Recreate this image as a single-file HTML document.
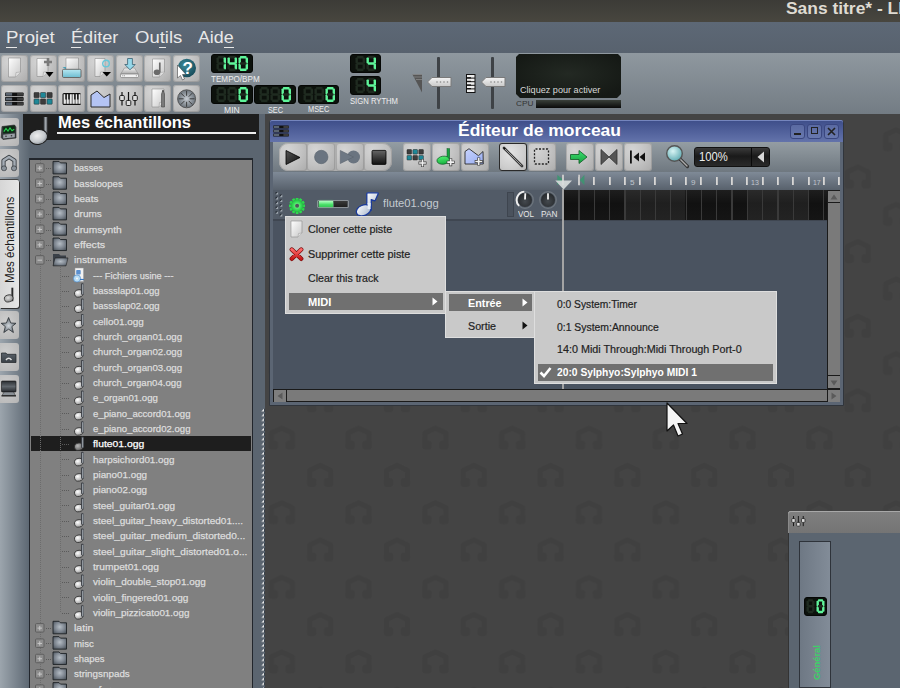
<!DOCTYPE html><html><head><meta charset="utf-8"><style>
*{margin:0;padding:0;box-sizing:border-box}
html,body{width:900px;height:688px;overflow:hidden;background:#444;font-family:"Liberation Sans", sans-serif}
.a{position:absolute}
.t{position:absolute;white-space:nowrap;line-height:1}
.tb{position:absolute;width:27px;height:27px;border-radius:3px;background:radial-gradient(ellipse at 30% 25%,#d4d4d4 0%,#c3c3c3 50%,#ababab 100%);box-shadow:inset 0 0 0 1px rgba(110,110,110,.3)}
</style></head><body><svg class="a" style="left:0px;top:114px;" width="900" height="574" viewBox="0 0 900 574"><defs><pattern id="lg" patternUnits="userSpaceOnUse" width="76.8" height="74.6" x="13.0" y="-12.0"><g transform="translate(0,0)"><path d="M-10.5,9 L-10.5,-4.5 L0,-9.5 L10.5,-4.5 L10.5,9" fill="none" stroke="#404040" stroke-width="5.2" stroke-linecap="round" stroke-linejoin="round"/><rect x="-13.2" y="3" width="9.5" height="9" rx="3" fill="#404040"/><rect x="3.7" y="3" width="9.5" height="9" rx="3" fill="#404040"/></g><g transform="translate(76.8,0)"><path d="M-10.5,9 L-10.5,-4.5 L0,-9.5 L10.5,-4.5 L10.5,9" fill="none" stroke="#404040" stroke-width="5.2" stroke-linecap="round" stroke-linejoin="round"/><rect x="-13.2" y="3" width="9.5" height="9" rx="3" fill="#404040"/><rect x="3.7" y="3" width="9.5" height="9" rx="3" fill="#404040"/></g><g transform="translate(0,74.6)"><path d="M-10.5,9 L-10.5,-4.5 L0,-9.5 L10.5,-4.5 L10.5,9" fill="none" stroke="#404040" stroke-width="5.2" stroke-linecap="round" stroke-linejoin="round"/><rect x="-13.2" y="3" width="9.5" height="9" rx="3" fill="#404040"/><rect x="3.7" y="3" width="9.5" height="9" rx="3" fill="#404040"/></g><g transform="translate(76.8,74.6)"><path d="M-10.5,9 L-10.5,-4.5 L0,-9.5 L10.5,-4.5 L10.5,9" fill="none" stroke="#404040" stroke-width="5.2" stroke-linecap="round" stroke-linejoin="round"/><rect x="-13.2" y="3" width="9.5" height="9" rx="3" fill="#404040"/><rect x="3.7" y="3" width="9.5" height="9" rx="3" fill="#404040"/></g><g transform="translate(38.4,37.3)"><path d="M-10.5,9 L-10.5,-4.5 L0,-9.5 L10.5,-4.5 L10.5,9" fill="none" stroke="#404040" stroke-width="5.2" stroke-linecap="round" stroke-linejoin="round"/><rect x="-13.2" y="3" width="9.5" height="9" rx="3" fill="#404040"/><rect x="3.7" y="3" width="9.5" height="9" rx="3" fill="#404040"/></g></pattern></defs><rect width="900" height="574" fill="#444444"/><rect width="900" height="574" fill="url(#lg)"/></svg><div class="a" style="left:0px;top:0px;width:900px;height:22px;background:linear-gradient(#3c3b37,#48463f)"></div><div class="t" style="left:785.50px;top:1.46px;font-size:16px;color:#dfdbd2;font-weight:bold;transform:scaleX(1.0880);transform-origin:0 0;">Sans titre* - LMMS</div><div class="a" style="left:0px;top:22px;width:900px;height:31px;background:linear-gradient(#5d6876,#58626e)"></div><div class="t" style="left:6.00px;top:28.91px;font-size:17px;color:#e8e8e8;transform:scaleX(1.0966);transform-origin:0 0;">Projet</div><div class="a" style="left:6px;top:46.8px;width:10.5px;height:1.3px;background:#e8e8e8"></div><div class="t" style="left:71.30px;top:28.91px;font-size:17px;color:#e8e8e8;transform:scaleX(1.0673);transform-origin:0 0;">Éditer</div><div class="a" style="left:71.3px;top:46.8px;width:9.5px;height:1.3px;background:#e8e8e8"></div><div class="t" style="left:135.00px;top:28.91px;font-size:17px;color:#e8e8e8;transform:scaleX(1.0885);transform-origin:0 0;">Outils</div><div class="a" style="left:159px;top:46.8px;width:7.2px;height:1.3px;background:#e8e8e8"></div><div class="t" style="left:197.70px;top:28.91px;font-size:17px;color:#e8e8e8;transform:scaleX(1.0462);transform-origin:0 0;">Aide</div><div class="a" style="left:224px;top:46.8px;width:10px;height:1.3px;background:#e8e8e8"></div><div class="a" style="left:0px;top:53px;width:900px;height:61px;background:linear-gradient(#8f989f,#737c84)"></div><div class="tb" style="left:1px;top:54.6px"></div><div class="tb" style="left:30px;top:54.6px"></div><div class="tb" style="left:58px;top:54.6px"></div><div class="tb" style="left:87px;top:54.6px"></div><div class="tb" style="left:116px;top:54.6px"></div><div class="tb" style="left:144px;top:54.6px"></div><div class="tb" style="left:173px;top:54.6px"></div><div class="tb" style="left:1px;top:84.8px"></div><div class="tb" style="left:30px;top:84.8px"></div><div class="tb" style="left:58px;top:84.8px"></div><div class="tb" style="left:87px;top:84.8px"></div><div class="tb" style="left:116px;top:84.8px"></div><div class="tb" style="left:144px;top:84.8px"></div><div class="tb" style="left:173px;top:84.8px"></div><svg class="a" style="left:1px;top:55px;" width="27" height="27" viewBox="0 0 27 27"><defs><linearGradient id="pg1" x1="0" y1="0" x2="1" y2="1"><stop offset="0" stop-color="#ffffff"/><stop offset="1" stop-color="#c8c8c8"/></linearGradient></defs><path d="M7.5,3 H19.5 V17 L14.5,22 H7.5 Z" fill="url(#pg1)" stroke="#8a8a8a" stroke-width="0.6"/><path d="M14.5,22 L15.0,17.5 L19.5,17" fill="#e0e0e0" stroke="#9a9a9a" stroke-width="0.5"/></svg><svg class="a" style="left:30px;top:55px;" width="27" height="27" viewBox="0 0 27 27"><defs><linearGradient id="pg2" x1="0" y1="0" x2="1" y2="1"><stop offset="0" stop-color="#ffffff"/><stop offset="1" stop-color="#c8c8c8"/></linearGradient></defs><path d="M7,3.5 H18 V16.5 L13,21.5 H7 Z" fill="url(#pg2)" stroke="#8a8a8a" stroke-width="0.6"/><path d="M13,21.5 L13.5,17.0 L18,16.5" fill="#e0e0e0" stroke="#9a9a9a" stroke-width="0.5"/><path d="M18,3 V11 M14,7 H22" stroke="#7a7a7a" stroke-width="2.6"/><path d="M15.5,17 H23.5 L19.5,22 Z" fill="#000"/></svg><svg class="a" style="left:58px;top:55px;" width="27" height="27" viewBox="0 0 27 27"><defs><linearGradient id="pg3" x1="0" y1="0" x2="1" y2="1"><stop offset="0" stop-color="#ffffff"/><stop offset="1" stop-color="#c8c8c8"/></linearGradient></defs><path d="M8,3 H20.5 V15 L20.5,15 H8 Z" fill="url(#pg3)" stroke="#8a8a8a" stroke-width="0.6"/><path d="M20.5,15 L21.0,15.5 L20.5,15" fill="#e0e0e0" stroke="#9a9a9a" stroke-width="0.5"/><defs><linearGradient id="tray" x1="0" y1="0" x2="0" y2="1"><stop offset="0" stop-color="#b8e8f2"/><stop offset="1" stop-color="#6cbcd0"/></linearGradient></defs><path d="M4.5,12 H8 V14.5 Z" fill="#4aa0b8"/><rect x="4.5" y="14.3" width="18.5" height="8.2" rx="1.2" fill="url(#tray)" stroke="#5a5450" stroke-width="0.8"/></svg><svg class="a" style="left:87px;top:55px;" width="27" height="27" viewBox="0 0 27 27"><defs><linearGradient id="pg4" x1="0" y1="0" x2="1" y2="1"><stop offset="0" stop-color="#ffffff"/><stop offset="1" stop-color="#c8c8c8"/></linearGradient></defs><path d="M8,3.5 H18 V16.5 L13,21.5 H8 Z" fill="url(#pg4)" stroke="#8a8a8a" stroke-width="0.6"/><path d="M13,21.5 L13.5,17.0 L18,16.5" fill="#e0e0e0" stroke="#9a9a9a" stroke-width="0.5"/><circle cx="19" cy="8.5" r="3.3" fill="none" stroke="#66c6d8" stroke-width="1.4"/><path d="M15.5,17 H24 L19.7,21.5 Z" fill="#000"/></svg><svg class="a" style="left:116px;top:55px;" width="27" height="27" viewBox="0 0 27 27"><defs><linearGradient id="sv" x1="0" y1="0" x2="0" y2="1"><stop offset="0" stop-color="#f0f0f0"/><stop offset="1" stop-color="#a8a8a8"/></linearGradient></defs><path d="M8.5,13 H18.5 L22.5,19.2 H4.5 Z" fill="url(#sv)" stroke="#8a8a8a" stroke-width="0.6"/><rect x="4.5" y="19" width="18" height="3.6" rx="1.2" fill="#f2f2f2" stroke="#7a7a7a" stroke-width="0.7"/><circle cx="6.8" cy="20.8" r="0.5" fill="#777"/><circle cx="8.4" cy="20.8" r="0.5" fill="#777"/><circle cx="20.3" cy="20.8" r="0.5" fill="#777"/><path d="M11.6,3.5 H16.4 V9.5 H19.2 L14,14.8 L8.8,9.5 H11.6 Z" fill="#96d8ea" stroke="#3a6070" stroke-width="0.8"/></svg><svg class="a" style="left:144px;top:55px;" width="27" height="27" viewBox="0 0 27 27"><defs><linearGradient id="pg6" x1="0" y1="0" x2="1" y2="1"><stop offset="0" stop-color="#ffffff"/><stop offset="1" stop-color="#c8c8c8"/></linearGradient></defs><path d="M8.5,4 H20.5 V17 L15.5,22 H8.5 Z" fill="url(#pg6)" stroke="#8a8a8a" stroke-width="0.6"/><path d="M15.5,22 L16.0,17.5 L20.5,17" fill="#e0e0e0" stroke="#9a9a9a" stroke-width="0.5"/><ellipse cx="13" cy="17.2" rx="3.3" ry="2.8" fill="#6a6a6a"/><path d="M15.8,17 V7.5" stroke="#6a6a6a" stroke-width="1.7"/></svg><svg class="a" style="left:173px;top:55px;" width="27" height="27" viewBox="0 0 27 27"><defs><radialGradient id="wt" cx="0.4" cy="0.35" r="0.7"><stop offset="0" stop-color="#3a8898"/><stop offset="1" stop-color="#174a58"/></radialGradient></defs><circle cx="13.8" cy="13" r="9.2" fill="url(#wt)"/><text x="14.8" y="19.3" font-family="Liberation Sans" font-weight="bold" font-size="17" fill="#fff" text-anchor="middle">?</text><path d="M4.5,10 V23 L7.5,20.5 L9.5,25 L11.5,24 L9.5,19.5 L13,19.5 Z" fill="#fff" stroke="#444" stroke-width="0.6"/></svg><svg class="a" style="left:1px;top:85px;" width="27" height="27" viewBox="0 0 27 27"><rect x="4" y="7.40" width="18.6" height="3.87" rx="0.8" fill="#111"/><rect x="4.6" y="8.00" width="6.51" height="2.67" fill="#5a6470"/><rect x="16.09" y="8.00" width="6.14" height="2.67" fill="#3c3c3c"/><rect x="4" y="12.07" width="18.6" height="3.87" rx="0.8" fill="#111"/><rect x="4.6" y="12.67" width="6.51" height="2.67" fill="#5a6470"/><rect x="16.09" y="12.67" width="6.14" height="2.67" fill="#3c3c3c"/><rect x="4" y="16.73" width="18.6" height="3.87" rx="0.8" fill="#111"/><rect x="4.6" y="17.33" width="6.51" height="2.67" fill="#5a6470"/><rect x="16.09" y="17.33" width="6.14" height="2.67" fill="#3c3c3c"/></svg><svg class="a" style="left:30px;top:85px;" width="27" height="27" viewBox="0 0 27 27"><rect x="4.00" y="7.50" width="5.2" height="5.2" rx="0.6" fill="#3c3c3c" stroke="#222" stroke-width="0.5"/><rect x="10.50" y="7.50" width="5.2" height="5.2" rx="0.6" fill="#1f8898" stroke="#222" stroke-width="0.5"/><rect x="17.00" y="7.50" width="5.2" height="5.2" rx="0.6" fill="#3c3c3c" stroke="#222" stroke-width="0.5"/><rect x="4.00" y="14.00" width="5.2" height="5.2" rx="0.6" fill="#1f8898" stroke="#222" stroke-width="0.5"/><rect x="10.50" y="14.00" width="5.2" height="5.2" rx="0.6" fill="#3c3c3c" stroke="#222" stroke-width="0.5"/><rect x="17.00" y="14.00" width="5.2" height="5.2" rx="0.6" fill="#1f8898" stroke="#222" stroke-width="0.5"/></svg><svg class="a" style="left:58px;top:85px;" width="27" height="27" viewBox="0 0 27 27"><rect x="4.5" y="8" width="18.5" height="12" rx="1.5" fill="#111"/><rect x="5.60" y="9.2" width="2.3" height="9.6" fill="#e8e8e8"/><rect x="8.55" y="9.2" width="2.3" height="9.6" fill="#e8e8e8"/><rect x="11.50" y="9.2" width="2.3" height="9.6" fill="#e8e8e8"/><rect x="14.45" y="9.2" width="2.3" height="9.6" fill="#e8e8e8"/><rect x="17.40" y="9.2" width="2.3" height="9.6" fill="#e8e8e8"/><rect x="20.35" y="9.2" width="2.3" height="9.6" fill="#e8e8e8"/><rect x="7.30" y="9" width="1.4" height="5.5" fill="#111"/><rect x="10.25" y="9" width="1.4" height="5.5" fill="#111"/><rect x="16.15" y="9" width="1.4" height="5.5" fill="#111"/><rect x="19.10" y="9" width="1.4" height="5.5" fill="#111"/></svg><svg class="a" style="left:87px;top:85px;" width="27" height="27" viewBox="0 0 27 27"><path d="M4,10 L10,6 L17,12.5 L23,9 V22 H4 Z" fill="#b4c4f4" stroke="#2a2a2a" stroke-width="1"/></svg><svg class="a" style="left:116px;top:85px;" width="27" height="27" viewBox="0 0 27 27"><path d="M6.0,7 V20.5" stroke="#111" stroke-width="1.2"/><rect x="3.7" y="10.5" width="4.6" height="5.0" rx="1.0" fill="#ddd" stroke="#111" stroke-width="0.9"/><path d="M12.5,7 V20.5" stroke="#111" stroke-width="1.2"/><rect x="10.2" y="15.5" width="4.6" height="5.0" rx="1.0" fill="#ddd" stroke="#111" stroke-width="0.9"/><path d="M19.0,7 V20.5" stroke="#111" stroke-width="1.2"/><rect x="16.7" y="10.5" width="4.6" height="5.0" rx="1.0" fill="#ddd" stroke="#111" stroke-width="0.9"/></svg><svg class="a" style="left:144px;top:85px;" width="27" height="27" viewBox="0 0 27 27"><defs><linearGradient id="pg7" x1="0" y1="0" x2="1" y2="1"><stop offset="0" stop-color="#ffffff"/><stop offset="1" stop-color="#c8c8c8"/></linearGradient></defs><path d="M8,4 H20 V17 L15,22 H8 Z" fill="url(#pg7)" stroke="#8a8a8a" stroke-width="0.6"/><path d="M15,22 L15.5,17.5 L20,17" fill="#e0e0e0" stroke="#9a9a9a" stroke-width="0.5"/><path d="M17.5,9 L19,5 L20.5,9 V22 H17.5 Z" fill="#7a7a7a" stroke="#444" stroke-width="0.6"/><path d="M18.4,6.5 L19,5 L19.6,6.5 Z" fill="#111"/></svg><svg class="a" style="left:173px;top:85px;" width="27" height="27" viewBox="0 0 27 27"><defs><radialGradient id="ctl" cx="0.5" cy="0.5" r="0.6"><stop offset="0" stop-color="#c6ccd2"/><stop offset="1" stop-color="#5a626a"/></radialGradient></defs><circle cx="13.6" cy="13.8" r="9" fill="url(#ctl)" stroke="#444" stroke-width="0.8"/><path d="M16.60,13.80 L21.60,13.80" stroke="#333" stroke-width="0.9"/><path d="M15.72,15.92 L19.26,19.46" stroke="#333" stroke-width="0.9"/><path d="M13.60,16.80 L13.60,21.80" stroke="#333" stroke-width="0.9"/><path d="M11.48,15.92 L7.94,19.46" stroke="#333" stroke-width="0.9"/><path d="M10.60,13.80 L5.60,13.80" stroke="#333" stroke-width="0.9"/><path d="M11.48,11.68 L7.94,8.14" stroke="#333" stroke-width="0.9"/><path d="M13.60,10.80 L13.60,5.80" stroke="#333" stroke-width="0.9"/><path d="M15.72,11.68 L19.26,8.14" stroke="#333" stroke-width="0.9"/></svg><svg class="a" style="left:211px;top:54px;" width="42" height="19" viewBox="0 0 42 19"><rect x="0.5" y="0.5" width="41" height="18" rx="2.5" fill="#0c110c" stroke="#050705"/><rect x="6.94" y="2.00" width="6.62" height="2.40" rx="0.8" fill="#1f2b20"/><rect x="12.60" y="3.44" width="2.40" height="6.06" rx="0.8" fill="#5ff59a"/><rect x="12.60" y="9.50" width="2.40" height="6.06" rx="0.8" fill="#5ff59a"/><rect x="6.94" y="14.60" width="6.62" height="2.40" rx="0.8" fill="#1f2b20"/><rect x="5.50" y="9.50" width="2.40" height="6.06" rx="0.8" fill="#1f2b20"/><rect x="5.50" y="3.44" width="2.40" height="6.06" rx="0.8" fill="#1f2b20"/><rect x="6.94" y="8.30" width="6.62" height="2.40" rx="0.8" fill="#1f2b20"/><rect x="17.94" y="2.00" width="6.62" height="2.40" rx="0.8" fill="#1f2b20"/><rect x="23.60" y="3.44" width="2.40" height="6.06" rx="0.8" fill="#5ff59a"/><rect x="23.60" y="9.50" width="2.40" height="6.06" rx="0.8" fill="#5ff59a"/><rect x="17.94" y="14.60" width="6.62" height="2.40" rx="0.8" fill="#1f2b20"/><rect x="16.50" y="9.50" width="2.40" height="6.06" rx="0.8" fill="#1f2b20"/><rect x="16.50" y="3.44" width="2.40" height="6.06" rx="0.8" fill="#5ff59a"/><rect x="17.94" y="8.30" width="6.62" height="2.40" rx="0.8" fill="#5ff59a"/><rect x="28.94" y="2.00" width="6.62" height="2.40" rx="0.8" fill="#5ff59a"/><rect x="34.60" y="3.44" width="2.40" height="6.06" rx="0.8" fill="#5ff59a"/><rect x="34.60" y="9.50" width="2.40" height="6.06" rx="0.8" fill="#5ff59a"/><rect x="28.94" y="14.60" width="6.62" height="2.40" rx="0.8" fill="#5ff59a"/><rect x="27.50" y="9.50" width="2.40" height="6.06" rx="0.8" fill="#5ff59a"/><rect x="27.50" y="3.44" width="2.40" height="6.06" rx="0.8" fill="#5ff59a"/><rect x="28.94" y="8.30" width="6.62" height="2.40" rx="0.8" fill="#1f2b20"/></svg><svg class="a" style="left:211px;top:85px;" width="42" height="19" viewBox="0 0 42 19"><rect x="0.5" y="0.5" width="41" height="18" rx="2.5" fill="#0c110c" stroke="#050705"/><rect x="6.94" y="2.00" width="6.62" height="2.40" rx="0.8" fill="#1f2b20"/><rect x="12.60" y="3.44" width="2.40" height="6.06" rx="0.8" fill="#1f2b20"/><rect x="12.60" y="9.50" width="2.40" height="6.06" rx="0.8" fill="#1f2b20"/><rect x="6.94" y="14.60" width="6.62" height="2.40" rx="0.8" fill="#1f2b20"/><rect x="5.50" y="9.50" width="2.40" height="6.06" rx="0.8" fill="#1f2b20"/><rect x="5.50" y="3.44" width="2.40" height="6.06" rx="0.8" fill="#1f2b20"/><rect x="6.94" y="8.30" width="6.62" height="2.40" rx="0.8" fill="#1f2b20"/><rect x="17.94" y="2.00" width="6.62" height="2.40" rx="0.8" fill="#1f2b20"/><rect x="23.60" y="3.44" width="2.40" height="6.06" rx="0.8" fill="#1f2b20"/><rect x="23.60" y="9.50" width="2.40" height="6.06" rx="0.8" fill="#1f2b20"/><rect x="17.94" y="14.60" width="6.62" height="2.40" rx="0.8" fill="#1f2b20"/><rect x="16.50" y="9.50" width="2.40" height="6.06" rx="0.8" fill="#1f2b20"/><rect x="16.50" y="3.44" width="2.40" height="6.06" rx="0.8" fill="#1f2b20"/><rect x="17.94" y="8.30" width="6.62" height="2.40" rx="0.8" fill="#1f2b20"/><rect x="28.94" y="2.00" width="6.62" height="2.40" rx="0.8" fill="#5ff59a"/><rect x="34.60" y="3.44" width="2.40" height="6.06" rx="0.8" fill="#5ff59a"/><rect x="34.60" y="9.50" width="2.40" height="6.06" rx="0.8" fill="#5ff59a"/><rect x="28.94" y="14.60" width="6.62" height="2.40" rx="0.8" fill="#5ff59a"/><rect x="27.50" y="9.50" width="2.40" height="6.06" rx="0.8" fill="#5ff59a"/><rect x="27.50" y="3.44" width="2.40" height="6.06" rx="0.8" fill="#5ff59a"/><rect x="28.94" y="8.30" width="6.62" height="2.40" rx="0.8" fill="#1f2b20"/></svg><svg class="a" style="left:254px;top:85px;" width="42" height="19" viewBox="0 0 42 19"><rect x="0.5" y="0.5" width="41" height="18" rx="2.5" fill="#0c110c" stroke="#050705"/><rect x="6.94" y="2.00" width="6.62" height="2.40" rx="0.8" fill="#1f2b20"/><rect x="12.60" y="3.44" width="2.40" height="6.06" rx="0.8" fill="#1f2b20"/><rect x="12.60" y="9.50" width="2.40" height="6.06" rx="0.8" fill="#1f2b20"/><rect x="6.94" y="14.60" width="6.62" height="2.40" rx="0.8" fill="#1f2b20"/><rect x="5.50" y="9.50" width="2.40" height="6.06" rx="0.8" fill="#1f2b20"/><rect x="5.50" y="3.44" width="2.40" height="6.06" rx="0.8" fill="#1f2b20"/><rect x="6.94" y="8.30" width="6.62" height="2.40" rx="0.8" fill="#1f2b20"/><rect x="17.94" y="2.00" width="6.62" height="2.40" rx="0.8" fill="#1f2b20"/><rect x="23.60" y="3.44" width="2.40" height="6.06" rx="0.8" fill="#1f2b20"/><rect x="23.60" y="9.50" width="2.40" height="6.06" rx="0.8" fill="#1f2b20"/><rect x="17.94" y="14.60" width="6.62" height="2.40" rx="0.8" fill="#1f2b20"/><rect x="16.50" y="9.50" width="2.40" height="6.06" rx="0.8" fill="#1f2b20"/><rect x="16.50" y="3.44" width="2.40" height="6.06" rx="0.8" fill="#1f2b20"/><rect x="17.94" y="8.30" width="6.62" height="2.40" rx="0.8" fill="#1f2b20"/><rect x="28.94" y="2.00" width="6.62" height="2.40" rx="0.8" fill="#5ff59a"/><rect x="34.60" y="3.44" width="2.40" height="6.06" rx="0.8" fill="#5ff59a"/><rect x="34.60" y="9.50" width="2.40" height="6.06" rx="0.8" fill="#5ff59a"/><rect x="28.94" y="14.60" width="6.62" height="2.40" rx="0.8" fill="#5ff59a"/><rect x="27.50" y="9.50" width="2.40" height="6.06" rx="0.8" fill="#5ff59a"/><rect x="27.50" y="3.44" width="2.40" height="6.06" rx="0.8" fill="#5ff59a"/><rect x="28.94" y="8.30" width="6.62" height="2.40" rx="0.8" fill="#1f2b20"/></svg><svg class="a" style="left:298px;top:85px;" width="41" height="19" viewBox="0 0 41 19"><rect x="0.5" y="0.5" width="40" height="18" rx="2.5" fill="#0c110c" stroke="#050705"/><rect x="6.94" y="2.00" width="6.62" height="2.40" rx="0.8" fill="#1f2b20"/><rect x="12.60" y="3.44" width="2.40" height="6.06" rx="0.8" fill="#1f2b20"/><rect x="12.60" y="9.50" width="2.40" height="6.06" rx="0.8" fill="#1f2b20"/><rect x="6.94" y="14.60" width="6.62" height="2.40" rx="0.8" fill="#1f2b20"/><rect x="5.50" y="9.50" width="2.40" height="6.06" rx="0.8" fill="#1f2b20"/><rect x="5.50" y="3.44" width="2.40" height="6.06" rx="0.8" fill="#1f2b20"/><rect x="6.94" y="8.30" width="6.62" height="2.40" rx="0.8" fill="#1f2b20"/><rect x="17.94" y="2.00" width="6.62" height="2.40" rx="0.8" fill="#1f2b20"/><rect x="23.60" y="3.44" width="2.40" height="6.06" rx="0.8" fill="#1f2b20"/><rect x="23.60" y="9.50" width="2.40" height="6.06" rx="0.8" fill="#1f2b20"/><rect x="17.94" y="14.60" width="6.62" height="2.40" rx="0.8" fill="#1f2b20"/><rect x="16.50" y="9.50" width="2.40" height="6.06" rx="0.8" fill="#1f2b20"/><rect x="16.50" y="3.44" width="2.40" height="6.06" rx="0.8" fill="#1f2b20"/><rect x="17.94" y="8.30" width="6.62" height="2.40" rx="0.8" fill="#1f2b20"/><rect x="28.94" y="2.00" width="6.62" height="2.40" rx="0.8" fill="#5ff59a"/><rect x="34.60" y="3.44" width="2.40" height="6.06" rx="0.8" fill="#5ff59a"/><rect x="34.60" y="9.50" width="2.40" height="6.06" rx="0.8" fill="#5ff59a"/><rect x="28.94" y="14.60" width="6.62" height="2.40" rx="0.8" fill="#5ff59a"/><rect x="27.50" y="9.50" width="2.40" height="6.06" rx="0.8" fill="#5ff59a"/><rect x="27.50" y="3.44" width="2.40" height="6.06" rx="0.8" fill="#5ff59a"/><rect x="28.94" y="8.30" width="6.62" height="2.40" rx="0.8" fill="#1f2b20"/></svg><svg class="a" style="left:350px;top:54px;" width="31" height="19" viewBox="0 0 31 19"><rect x="0.5" y="0.5" width="30" height="18" rx="2.5" fill="#0c110c" stroke="#050705"/><rect x="6.94" y="2.00" width="6.62" height="2.40" rx="0.8" fill="#1f2b20"/><rect x="12.60" y="3.44" width="2.40" height="6.06" rx="0.8" fill="#1f2b20"/><rect x="12.60" y="9.50" width="2.40" height="6.06" rx="0.8" fill="#1f2b20"/><rect x="6.94" y="14.60" width="6.62" height="2.40" rx="0.8" fill="#1f2b20"/><rect x="5.50" y="9.50" width="2.40" height="6.06" rx="0.8" fill="#1f2b20"/><rect x="5.50" y="3.44" width="2.40" height="6.06" rx="0.8" fill="#1f2b20"/><rect x="6.94" y="8.30" width="6.62" height="2.40" rx="0.8" fill="#1f2b20"/><rect x="17.94" y="2.00" width="6.62" height="2.40" rx="0.8" fill="#1f2b20"/><rect x="23.60" y="3.44" width="2.40" height="6.06" rx="0.8" fill="#5ff59a"/><rect x="23.60" y="9.50" width="2.40" height="6.06" rx="0.8" fill="#5ff59a"/><rect x="17.94" y="14.60" width="6.62" height="2.40" rx="0.8" fill="#1f2b20"/><rect x="16.50" y="9.50" width="2.40" height="6.06" rx="0.8" fill="#1f2b20"/><rect x="16.50" y="3.44" width="2.40" height="6.06" rx="0.8" fill="#5ff59a"/><rect x="17.94" y="8.30" width="6.62" height="2.40" rx="0.8" fill="#5ff59a"/></svg><svg class="a" style="left:350px;top:76px;" width="31" height="19" viewBox="0 0 31 19"><rect x="0.5" y="0.5" width="30" height="18" rx="2.5" fill="#0c110c" stroke="#050705"/><rect x="6.94" y="2.00" width="6.62" height="2.40" rx="0.8" fill="#1f2b20"/><rect x="12.60" y="3.44" width="2.40" height="6.06" rx="0.8" fill="#1f2b20"/><rect x="12.60" y="9.50" width="2.40" height="6.06" rx="0.8" fill="#1f2b20"/><rect x="6.94" y="14.60" width="6.62" height="2.40" rx="0.8" fill="#1f2b20"/><rect x="5.50" y="9.50" width="2.40" height="6.06" rx="0.8" fill="#1f2b20"/><rect x="5.50" y="3.44" width="2.40" height="6.06" rx="0.8" fill="#1f2b20"/><rect x="6.94" y="8.30" width="6.62" height="2.40" rx="0.8" fill="#1f2b20"/><rect x="17.94" y="2.00" width="6.62" height="2.40" rx="0.8" fill="#1f2b20"/><rect x="23.60" y="3.44" width="2.40" height="6.06" rx="0.8" fill="#5ff59a"/><rect x="23.60" y="9.50" width="2.40" height="6.06" rx="0.8" fill="#5ff59a"/><rect x="17.94" y="14.60" width="6.62" height="2.40" rx="0.8" fill="#1f2b20"/><rect x="16.50" y="9.50" width="2.40" height="6.06" rx="0.8" fill="#1f2b20"/><rect x="16.50" y="3.44" width="2.40" height="6.06" rx="0.8" fill="#5ff59a"/><rect x="17.94" y="8.30" width="6.62" height="2.40" rx="0.8" fill="#5ff59a"/></svg><div class="t" style="left:211.30px;top:75.00px;font-size:8.5px;color:#eeeeee;transform:scaleX(0.9548);transform-origin:0 0;">TEMPO/BPM</div><div class="t" style="left:224.30px;top:105.60px;font-size:8.5px;color:#eeeeee;transform:scaleX(1.0076);transform-origin:0 0;">MIN</div><div class="t" style="left:268.00px;top:105.60px;font-size:8.5px;color:#eeeeee;transform:scaleX(0.8582);transform-origin:0 0;">SEC</div><div class="t" style="left:308.00px;top:105.40px;font-size:8.5px;color:#eeeeee;transform:scaleX(0.8673);transform-origin:0 0;">MSEC</div><div class="t" style="left:350.00px;top:97.40px;font-size:8.5px;color:#eeeeee;transform:scaleX(0.9021);transform-origin:0 0;">SIGN RYTHM</div><svg class="a" style="left:412px;top:74px;" width="11" height="19" viewBox="0 0 11 19"><path d="M0.5,0.5 H10 L10,18.5 Z" fill="#555"/><path d="M0.5,0.5 H10 M2,3 H10 M4,5.5 H10" stroke="#888" stroke-width="0.8"/></svg><svg class="a" style="left:466px;top:74px;" width="10" height="19" viewBox="0 0 10 19"><rect x="0" y="0" width="9.5" height="19" fill="#111"/><rect x="1" y="1.0" width="7.5" height="2.6" fill="#eee"/><rect x="1" y="4.6" width="7.5" height="2.6" fill="#eee"/><rect x="1" y="8.2" width="7.5" height="2.6" fill="#eee"/><rect x="1" y="11.8" width="7.5" height="2.6" fill="#eee"/><rect x="1" y="15.4" width="7.5" height="2.6" fill="#eee"/><rect x="0" y="3.2" width="5" height="1.2" fill="#111"/><rect x="0" y="6.8" width="5" height="1.2" fill="#111"/><rect x="0" y="10.4" width="5" height="1.2" fill="#111"/><rect x="0" y="14.0" width="5" height="1.2" fill="#111"/></svg><div class="a" style="left:437.2px;top:57px;width:3px;height:52px;background:#3e4246;border-radius:1px"></div><svg class="a" style="left:426.7px;top:77px;" width="25" height="10" viewBox="0 0 25 10"><defs><linearGradient id="hd" x1="0" y1="0" x2="0" y2="1"><stop offset="0" stop-color="#f4f4f4"/><stop offset="1" stop-color="#c8c8c8"/></linearGradient></defs><path d="M0.5,5 L5,0.5 L24,0.5 L24,9.5 L5,9.5 Z" fill="url(#hd)" stroke="#7a7a7a"/><circle cx="10.0" cy="5" r="0.8" fill="#888"/><circle cx="13.5" cy="5" r="0.8" fill="#888"/><circle cx="17.0" cy="5" r="0.8" fill="#888"/><circle cx="20.5" cy="5" r="0.8" fill="#888"/></svg><div class="a" style="left:491px;top:57px;width:3px;height:52px;background:#3e4246;border-radius:1px"></div><svg class="a" style="left:480.5px;top:77px;" width="25" height="10" viewBox="0 0 25 10"><defs><linearGradient id="hd" x1="0" y1="0" x2="0" y2="1"><stop offset="0" stop-color="#f4f4f4"/><stop offset="1" stop-color="#c8c8c8"/></linearGradient></defs><path d="M0.5,5 L5,0.5 L24,0.5 L24,9.5 L5,9.5 Z" fill="url(#hd)" stroke="#7a7a7a"/><circle cx="10.0" cy="5" r="0.8" fill="#888"/><circle cx="13.5" cy="5" r="0.8" fill="#888"/><circle cx="17.0" cy="5" r="0.8" fill="#888"/><circle cx="20.5" cy="5" r="0.8" fill="#888"/></svg><svg class="a" style="left:516px;top:54px;" width="105" height="44" viewBox="0 0 105 44"><defs><radialGradient id="cpu" cx="0.5" cy="0.45" r="0.6"><stop offset="0" stop-color="#232923"/><stop offset="1" stop-color="#151915"/></radialGradient></defs><path d="M3,0 L102,0 L105,3 L105,40 L101,44 L4,44 L0,40 L0,3 Z" fill="url(#cpu)"/></svg><div class="t" style="left:520.30px;top:86.08px;font-size:9px;color:#d8d8d8;transform:scaleX(1.0108);transform-origin:0 0;">Cliquez pour activer</div><div class="t" style="left:516.30px;top:99.63px;font-size:8px;color:#333333;transform:scaleX(1.0301);transform-origin:0 0;">CPU</div><div class="a" style="left:536px;top:100px;width:85px;height:7.5px;background:linear-gradient(#3a403a,#0a0a0a)"></div><div class="a" style="left:0px;top:114px;width:265px;height:574px;background:#5b6570"></div><div class="a" style="left:0px;top:114px;width:30px;height:574px;background:linear-gradient(90deg,#9ca5ad,#5b6671)"></div><div class="a" style="left:0px;top:118px;width:19px;height:28px;background:radial-gradient(ellipse at 30% 40%,#cfcfcf,#b4b4b4);border-radius:0 3px 3px 0"></div><div class="a" style="left:0px;top:149px;width:19px;height:28px;background:radial-gradient(ellipse at 30% 40%,#cfcfcf,#b4b4b4);border-radius:0 3px 3px 0"></div><div class="a" style="left:0px;top:311px;width:19px;height:28px;background:radial-gradient(ellipse at 30% 40%,#cfcfcf,#b4b4b4);border-radius:0 3px 3px 0"></div><div class="a" style="left:0px;top:343px;width:19px;height:28px;background:radial-gradient(ellipse at 30% 40%,#cfcfcf,#b4b4b4);border-radius:0 3px 3px 0"></div><div class="a" style="left:0px;top:375px;width:19px;height:28px;background:radial-gradient(ellipse at 30% 40%,#cfcfcf,#b4b4b4);border-radius:0 3px 3px 0"></div><div class="a" style="left:0px;top:180px;width:19.3px;height:127.5px;background:linear-gradient(90deg,#d6d6d6,#e6e6e6);border-radius:0 2px 3px 0;box-shadow:1px 1px 0 #333, 0 -1px 0 #444"></div><div class="t" style="left:4.3px;top:283.3px;font-size:12px;color:#1a1a1a;transform:rotate(-90deg) scaleX(0.965);transform-origin:0 0">Mes échantillons</div><svg class="a" style="left:0px;top:123px;" width="18" height="18" viewBox="0 0 18 18"><path d="M2,3.5 L14.5,2 L16,4 V15 L3,16.5 L1.2,14.5 Z" fill="#3a3e42" stroke="#222" stroke-width="0.6"/><path d="M3.2,3.8 L14.8,2.6 V9.4 L3.2,10.6 Z" fill="#0e2a14"/><path d="M3.8,8.6 L6,5.4 L8,8 L10,5 L12,7.8 L14.2,6.2" stroke="#2ad050" fill="none" stroke-width="1.1"/><path d="M3.2,11.8 L14.8,10.6 V14.2 L3.2,15.4 Z" fill="#9aa0a6"/><circle cx="6" cy="13.3" r="0.8" fill="#333"/><circle cx="11.5" cy="12.7" r="0.8" fill="#333"/></svg><svg class="a" style="left:0px;top:154px;" width="18" height="19" viewBox="0 0 18 19"><path d="M3.5,14.5 L3.5,6.5 L9,3 L14.5,6.5 L14.5,14.5" fill="none" stroke="#3a3f44" stroke-width="4.2" stroke-linejoin="round"/><path d="M3.5,14.5 L3.5,6.5 L9,3 L14.5,6.5 L14.5,14.5" fill="none" stroke="#a4acb4" stroke-width="2.4" stroke-linejoin="round"/><rect x="1.5" y="12" width="5" height="4.6" rx="2" fill="#8a929a" stroke="#3a3f44" stroke-width="0.8"/><rect x="11.5" y="12" width="5" height="4.6" rx="2" fill="#8a929a" stroke="#3a3f44" stroke-width="0.8"/></svg><svg class="a" style="left:0px;top:285px;" width="18" height="20" viewBox="0 0 18 20"><defs><radialGradient id="tn" cx="0.45" cy="0.4" r="0.6"><stop offset="0" stop-color="#e0e0e0"/><stop offset="1" stop-color="#8a8a8a"/></radialGradient></defs><rect x="11.4" y="2.7" width="1.9" height="13.5" fill="#2a2a2a"/><ellipse cx="8.7" cy="13.4" rx="4.4" ry="3.5" fill="url(#tn)" stroke="#333" stroke-width="0.8" transform="rotate(-15 8.7 13.4)"/></svg><svg class="a" style="left:0px;top:315px;" width="18" height="20" viewBox="0 0 18 20"><defs><radialGradient id="st" cx="0.5" cy="0.55" r="0.55"><stop offset="0" stop-color="#d0d6dc"/><stop offset="1" stop-color="#5a626a"/></radialGradient></defs><path d="M8.6,2.5 L10.8,8 L16,8.3 L11.9,11.6 L13.4,17.5 L8.6,14.2 L3.8,17.5 L5.3,11.6 L1.2,8.3 L6.4,8 Z" fill="url(#st)" stroke="#2a2f34" stroke-width="0.8" stroke-linejoin="round"/></svg><svg class="a" style="left:0px;top:350px;" width="18" height="16" viewBox="0 0 18 16"><defs><linearGradient id="hf" x1="0" y1="0" x2="0" y2="1"><stop offset="0" stop-color="#5a626a"/><stop offset="1" stop-color="#3a4046"/></linearGradient></defs><path d="M1.5,3 H6 L7,4.3 H16 V12.5 H1.5 Z" fill="url(#hf)" stroke="#1e2226" stroke-width="0.7"/><path d="M6,10 Q8.7,6.5 11.5,10" fill="none" stroke="#e0e0e0" stroke-width="1.5"/></svg><svg class="a" style="left:0px;top:379px;" width="18" height="20" viewBox="0 0 18 20"><defs><linearGradient id="cm" x1="0" y1="0" x2="0" y2="1"><stop offset="0" stop-color="#2a2e32"/><stop offset="0.5" stop-color="#60666c"/><stop offset="1" stop-color="#25282c"/></linearGradient></defs><rect x="1.5" y="2" width="14.5" height="11" rx="0.8" fill="url(#cm)" stroke="#111" stroke-width="0.6"/><path d="M4,13 L2,16.5 H15.5 L13.5,13 Z" fill="#8a9096" stroke="#222" stroke-width="0.5"/><rect x="1.5" y="16.2" width="14.5" height="1.3" fill="#222"/></svg><div class="a" style="left:23px;top:114px;width:236px;height:26px;background:#1e1e1e"></div><div class="t" style="left:58.00px;top:113.61px;font-size:17px;color:#ffffff;font-weight:bold;transform:scaleX(0.9709);transform-origin:0 0;">Mes échantillons</div><div class="a" style="left:57px;top:132.3px;width:199px;height:1.6px;background:#eeeeee"></div><svg class="a" style="left:25px;top:114px;" width="28" height="34" viewBox="0 0 28 34"><defs><radialGradient id="nt" cx="0.45" cy="0.4" r="0.6"><stop offset="0" stop-color="#eeeeee"/><stop offset="0.7" stop-color="#c4c8cc"/><stop offset="1" stop-color="#8a9096"/></radialGradient><linearGradient id="nst" gradientUnits="userSpaceOnUse" x1="18.6" y1="0" x2="22.4" y2="0"><stop offset="0" stop-color="#3a3e42"/><stop offset="0.55" stop-color="#a8aeb4"/><stop offset="1" stop-color="#4a4e52"/></linearGradient></defs><path d="M18.6,3 H22.4 V23 H18.6 Z" fill="url(#nst)"/><ellipse cx="13.3" cy="23" rx="9.3" ry="7.4" fill="url(#nt)" stroke="#1a1a1a" stroke-width="1" transform="rotate(-12 13.3 23)"/></svg><div class="a" style="left:29px;top:158px;width:223.5px;height:530px;background:#808080;border:1.5px solid #22262c;border-top-width:2px;border-right-width:1.8px;border-bottom:none"></div><div class="a" style="left:30.5px;top:436.1px;width:220.5px;height:14.5px;background:#1e1e1e"></div><div class="a" style="left:40px;top:160px;width:1px;height:528px;background:repeating-linear-gradient(#6c6c6c 0 1px,transparent 1px 2px)"></div><div class="a" style="left:60px;top:262.68px;width:1px;height:349.59px;background:repeating-linear-gradient(#6c6c6c 0 1px,transparent 1px 2px)"></div><svg class="a" style="left:29px;top:158px" width="223" height="530" viewBox="0 0 223 530"><defs><radialGradient id="fd" cx="0.5" cy="0.45" r="0.65"><stop offset="0" stop-color="#b4bcc4"/><stop offset="0.6" stop-color="#7a828c"/><stop offset="1" stop-color="#4e565e"/></radialGradient><radialGradient id="nt2" cx="0.4" cy="0.35" r="0.7"><stop offset="0" stop-color="#ffffff"/><stop offset="1" stop-color="#9a9a9a"/></radialGradient><radialGradient id="ntd" cx="0.4" cy="0.35" r="0.7"><stop offset="0" stop-color="#b8b8b8"/><stop offset="1" stop-color="#5a5a5a"/></radialGradient><linearGradient id="ns2" x1="0" y1="0" x2="1" y2="0"><stop offset="0" stop-color="#3a3a3a"/><stop offset="1" stop-color="#c0c0c0"/></linearGradient></defs><rect x="6.5" y="5.70" width="8.5" height="8.5" rx="1" fill="#8c8c8c" stroke="#5e5e5e" stroke-width="1"/><path d="M8.5,10.20 H13 M10.75,8.00 V12.40" stroke="#c8c8c8" stroke-width="1"/><rect x="17" y="10" width="1" height="1" fill="#5a5a5a"/><rect x="19" y="10" width="1" height="1" fill="#5a5a5a"/><rect x="21" y="10" width="1" height="1" fill="#5a5a5a"/><path d="M24,3.3999999999999773 H30 L31.5,4.899999999999977 H37.5 V15.899999999999977 H24 Z" fill="url(#fd)" stroke="#1e2226" stroke-width="0.9"/><rect x="6.5" y="21.03" width="8.5" height="8.5" rx="1" fill="#8c8c8c" stroke="#5e5e5e" stroke-width="1"/><path d="M8.5,25.53 H13 M10.75,23.33 V27.73" stroke="#c8c8c8" stroke-width="1"/><rect x="17" y="26" width="1" height="1" fill="#5a5a5a"/><rect x="19" y="26" width="1" height="1" fill="#5a5a5a"/><rect x="21" y="26" width="1" height="1" fill="#5a5a5a"/><path d="M24,18.72999999999999 H30 L31.5,20.22999999999999 H37.5 V31.22999999999999 H24 Z" fill="url(#fd)" stroke="#1e2226" stroke-width="0.9"/><rect x="6.5" y="36.36" width="8.5" height="8.5" rx="1" fill="#8c8c8c" stroke="#5e5e5e" stroke-width="1"/><path d="M8.5,40.86 H13 M10.75,38.66 V43.06" stroke="#c8c8c8" stroke-width="1"/><rect x="17" y="41" width="1" height="1" fill="#5a5a5a"/><rect x="19" y="41" width="1" height="1" fill="#5a5a5a"/><rect x="21" y="41" width="1" height="1" fill="#5a5a5a"/><path d="M24,34.059999999999974 H30 L31.5,35.559999999999974 H37.5 V46.559999999999974 H24 Z" fill="url(#fd)" stroke="#1e2226" stroke-width="0.9"/><rect x="6.5" y="51.69" width="8.5" height="8.5" rx="1" fill="#8c8c8c" stroke="#5e5e5e" stroke-width="1"/><path d="M8.5,56.19 H13 M10.75,53.99 V58.39" stroke="#c8c8c8" stroke-width="1"/><rect x="17" y="56" width="1" height="1" fill="#5a5a5a"/><rect x="19" y="56" width="1" height="1" fill="#5a5a5a"/><rect x="21" y="56" width="1" height="1" fill="#5a5a5a"/><path d="M24,49.389999999999986 H30 L31.5,50.889999999999986 H37.5 V61.889999999999986 H24 Z" fill="url(#fd)" stroke="#1e2226" stroke-width="0.9"/><rect x="6.5" y="67.02" width="8.5" height="8.5" rx="1" fill="#8c8c8c" stroke="#5e5e5e" stroke-width="1"/><path d="M8.5,71.52 H13 M10.75,69.32 V73.72" stroke="#c8c8c8" stroke-width="1"/><rect x="17" y="72" width="1" height="1" fill="#5a5a5a"/><rect x="19" y="72" width="1" height="1" fill="#5a5a5a"/><rect x="21" y="72" width="1" height="1" fill="#5a5a5a"/><path d="M24,64.71999999999997 H30 L31.5,66.21999999999997 H37.5 V77.21999999999997 H24 Z" fill="url(#fd)" stroke="#1e2226" stroke-width="0.9"/><rect x="6.5" y="82.35" width="8.5" height="8.5" rx="1" fill="#8c8c8c" stroke="#5e5e5e" stroke-width="1"/><path d="M8.5,86.85 H13 M10.75,84.65 V89.05" stroke="#c8c8c8" stroke-width="1"/><rect x="17" y="87" width="1" height="1" fill="#5a5a5a"/><rect x="19" y="87" width="1" height="1" fill="#5a5a5a"/><rect x="21" y="87" width="1" height="1" fill="#5a5a5a"/><path d="M24,80.04999999999998 H30 L31.5,81.54999999999998 H37.5 V92.54999999999998 H24 Z" fill="url(#fd)" stroke="#1e2226" stroke-width="0.9"/><rect x="6.5" y="97.68" width="8.5" height="8.5" rx="1" fill="#8c8c8c" stroke="#5e5e5e" stroke-width="1"/><path d="M8.5,102.18 H13" stroke="#c8c8c8" stroke-width="1"/><rect x="17" y="102" width="1" height="1" fill="#5a5a5a"/><rect x="19" y="102" width="1" height="1" fill="#5a5a5a"/><rect x="21" y="102" width="1" height="1" fill="#5a5a5a"/><path d="M24,95.88 H30 L31.5,97.38 H37 V107.88 H24 Z" fill="#3a4048"/><path d="M26,99.88 H39 L37,107.88 H24 Z" fill="url(#fd)" stroke="#222" stroke-width="0.6"/><rect x="33" y="118" width="1" height="1" fill="#5a5a5a"/><rect x="35" y="118" width="1" height="1" fill="#5a5a5a"/><rect x="37" y="118" width="1" height="1" fill="#5a5a5a"/><rect x="39" y="118" width="1" height="1" fill="#5a5a5a"/><path d="M46,110.00999999999999 H54.5 V123.50999999999999 H46 Z" fill="#f2f2f2" stroke="#9a9a9a" stroke-width="0.5"/><rect x="47.2" y="112.00999999999999" width="4.5" height="4.5" rx="0.8" fill="#5a90d0"/><circle cx="48" cy="120.50999999999999" r="3.6" fill="#b8dcf4" stroke="#4a88c8" stroke-width="0.7"/><circle cx="48" cy="120.50999999999999" r="1" fill="#f8f8f8"/><path d="M51,121.50999999999999 H55" stroke="#3a78c0" stroke-width="1.2"/><rect x="33" y="133" width="1" height="1" fill="#5a5a5a"/><rect x="35" y="133" width="1" height="1" fill="#5a5a5a"/><rect x="37" y="133" width="1" height="1" fill="#5a5a5a"/><rect x="39" y="133" width="1" height="1" fill="#5a5a5a"/><ellipse cx="49.8" cy="135.44" rx="4.3" ry="3.7" fill="url(#nt2)" stroke="#2e2e2e" stroke-width="0.8" transform="rotate(-12 49.8 135.44)"/><rect x="52.1" y="125.24" width="2.5" height="11.5" rx="0.8" fill="#3a3e44"/><rect x="53.1" y="126.24" width="1.2" height="10" fill="#9aa0a8"/><rect x="33" y="148" width="1" height="1" fill="#5a5a5a"/><rect x="35" y="148" width="1" height="1" fill="#5a5a5a"/><rect x="37" y="148" width="1" height="1" fill="#5a5a5a"/><rect x="39" y="148" width="1" height="1" fill="#5a5a5a"/><ellipse cx="49.8" cy="150.77" rx="4.3" ry="3.7" fill="url(#nt2)" stroke="#2e2e2e" stroke-width="0.8" transform="rotate(-12 49.8 150.77)"/><rect x="52.1" y="140.57" width="2.5" height="11.5" rx="0.8" fill="#3a3e44"/><rect x="53.1" y="141.57" width="1.2" height="10" fill="#9aa0a8"/><rect x="33" y="164" width="1" height="1" fill="#5a5a5a"/><rect x="35" y="164" width="1" height="1" fill="#5a5a5a"/><rect x="37" y="164" width="1" height="1" fill="#5a5a5a"/><rect x="39" y="164" width="1" height="1" fill="#5a5a5a"/><ellipse cx="49.8" cy="166.10" rx="4.3" ry="3.7" fill="url(#nt2)" stroke="#2e2e2e" stroke-width="0.8" transform="rotate(-12 49.8 166.10)"/><rect x="52.1" y="155.90" width="2.5" height="11.5" rx="0.8" fill="#3a3e44"/><rect x="53.1" y="156.90" width="1.2" height="10" fill="#9aa0a8"/><rect x="33" y="179" width="1" height="1" fill="#5a5a5a"/><rect x="35" y="179" width="1" height="1" fill="#5a5a5a"/><rect x="37" y="179" width="1" height="1" fill="#5a5a5a"/><rect x="39" y="179" width="1" height="1" fill="#5a5a5a"/><ellipse cx="49.8" cy="181.43" rx="4.3" ry="3.7" fill="url(#nt2)" stroke="#2e2e2e" stroke-width="0.8" transform="rotate(-12 49.8 181.43)"/><rect x="52.1" y="171.23" width="2.5" height="11.5" rx="0.8" fill="#3a3e44"/><rect x="53.1" y="172.23" width="1.2" height="10" fill="#9aa0a8"/><rect x="33" y="194" width="1" height="1" fill="#5a5a5a"/><rect x="35" y="194" width="1" height="1" fill="#5a5a5a"/><rect x="37" y="194" width="1" height="1" fill="#5a5a5a"/><rect x="39" y="194" width="1" height="1" fill="#5a5a5a"/><ellipse cx="49.8" cy="196.76" rx="4.3" ry="3.7" fill="url(#nt2)" stroke="#2e2e2e" stroke-width="0.8" transform="rotate(-12 49.8 196.76)"/><rect x="52.1" y="186.56" width="2.5" height="11.5" rx="0.8" fill="#3a3e44"/><rect x="53.1" y="187.56" width="1.2" height="10" fill="#9aa0a8"/><rect x="33" y="209" width="1" height="1" fill="#5a5a5a"/><rect x="35" y="209" width="1" height="1" fill="#5a5a5a"/><rect x="37" y="209" width="1" height="1" fill="#5a5a5a"/><rect x="39" y="209" width="1" height="1" fill="#5a5a5a"/><ellipse cx="49.8" cy="212.09" rx="4.3" ry="3.7" fill="url(#nt2)" stroke="#2e2e2e" stroke-width="0.8" transform="rotate(-12 49.8 212.09)"/><rect x="52.1" y="201.89" width="2.5" height="11.5" rx="0.8" fill="#3a3e44"/><rect x="53.1" y="202.89" width="1.2" height="10" fill="#9aa0a8"/><rect x="33" y="225" width="1" height="1" fill="#5a5a5a"/><rect x="35" y="225" width="1" height="1" fill="#5a5a5a"/><rect x="37" y="225" width="1" height="1" fill="#5a5a5a"/><rect x="39" y="225" width="1" height="1" fill="#5a5a5a"/><ellipse cx="49.8" cy="227.42" rx="4.3" ry="3.7" fill="url(#nt2)" stroke="#2e2e2e" stroke-width="0.8" transform="rotate(-12 49.8 227.42)"/><rect x="52.1" y="217.22" width="2.5" height="11.5" rx="0.8" fill="#3a3e44"/><rect x="53.1" y="218.22" width="1.2" height="10" fill="#9aa0a8"/><rect x="33" y="240" width="1" height="1" fill="#5a5a5a"/><rect x="35" y="240" width="1" height="1" fill="#5a5a5a"/><rect x="37" y="240" width="1" height="1" fill="#5a5a5a"/><rect x="39" y="240" width="1" height="1" fill="#5a5a5a"/><ellipse cx="49.8" cy="242.75" rx="4.3" ry="3.7" fill="url(#nt2)" stroke="#2e2e2e" stroke-width="0.8" transform="rotate(-12 49.8 242.75)"/><rect x="52.1" y="232.55" width="2.5" height="11.5" rx="0.8" fill="#3a3e44"/><rect x="53.1" y="233.55" width="1.2" height="10" fill="#9aa0a8"/><rect x="33" y="255" width="1" height="1" fill="#5a5a5a"/><rect x="35" y="255" width="1" height="1" fill="#5a5a5a"/><rect x="37" y="255" width="1" height="1" fill="#5a5a5a"/><rect x="39" y="255" width="1" height="1" fill="#5a5a5a"/><ellipse cx="49.8" cy="258.08" rx="4.3" ry="3.7" fill="url(#nt2)" stroke="#2e2e2e" stroke-width="0.8" transform="rotate(-12 49.8 258.08)"/><rect x="52.1" y="247.88" width="2.5" height="11.5" rx="0.8" fill="#3a3e44"/><rect x="53.1" y="248.88" width="1.2" height="10" fill="#9aa0a8"/><rect x="33" y="271" width="1" height="1" fill="#5a5a5a"/><rect x="35" y="271" width="1" height="1" fill="#5a5a5a"/><rect x="37" y="271" width="1" height="1" fill="#5a5a5a"/><rect x="39" y="271" width="1" height="1" fill="#5a5a5a"/><ellipse cx="49.8" cy="273.41" rx="4.3" ry="3.7" fill="url(#nt2)" stroke="#2e2e2e" stroke-width="0.8" transform="rotate(-12 49.8 273.41)"/><rect x="52.1" y="263.21" width="2.5" height="11.5" rx="0.8" fill="#3a3e44"/><rect x="53.1" y="264.21" width="1.2" height="10" fill="#9aa0a8"/><rect x="33" y="286" width="1" height="1" fill="#5a5a5a"/><rect x="35" y="286" width="1" height="1" fill="#5a5a5a"/><rect x="37" y="286" width="1" height="1" fill="#5a5a5a"/><rect x="39" y="286" width="1" height="1" fill="#5a5a5a"/><ellipse cx="49.8" cy="288.74" rx="4.3" ry="3.7" fill="url(#ntd)" stroke="#2e2e2e" stroke-width="0.8" transform="rotate(-12 49.8 288.74)"/><rect x="52.1" y="278.54" width="2.5" height="11.5" rx="0.8" fill="#3a3e44"/><rect x="53.1" y="279.54" width="1.2" height="10" fill="#9aa0a8"/><rect x="33" y="301" width="1" height="1" fill="#5a5a5a"/><rect x="35" y="301" width="1" height="1" fill="#5a5a5a"/><rect x="37" y="301" width="1" height="1" fill="#5a5a5a"/><rect x="39" y="301" width="1" height="1" fill="#5a5a5a"/><ellipse cx="49.8" cy="304.07" rx="4.3" ry="3.7" fill="url(#nt2)" stroke="#2e2e2e" stroke-width="0.8" transform="rotate(-12 49.8 304.07)"/><rect x="52.1" y="293.87" width="2.5" height="11.5" rx="0.8" fill="#3a3e44"/><rect x="53.1" y="294.87" width="1.2" height="10" fill="#9aa0a8"/><rect x="33" y="317" width="1" height="1" fill="#5a5a5a"/><rect x="35" y="317" width="1" height="1" fill="#5a5a5a"/><rect x="37" y="317" width="1" height="1" fill="#5a5a5a"/><rect x="39" y="317" width="1" height="1" fill="#5a5a5a"/><ellipse cx="49.8" cy="319.40" rx="4.3" ry="3.7" fill="url(#nt2)" stroke="#2e2e2e" stroke-width="0.8" transform="rotate(-12 49.8 319.40)"/><rect x="52.1" y="309.20" width="2.5" height="11.5" rx="0.8" fill="#3a3e44"/><rect x="53.1" y="310.20" width="1.2" height="10" fill="#9aa0a8"/><rect x="33" y="332" width="1" height="1" fill="#5a5a5a"/><rect x="35" y="332" width="1" height="1" fill="#5a5a5a"/><rect x="37" y="332" width="1" height="1" fill="#5a5a5a"/><rect x="39" y="332" width="1" height="1" fill="#5a5a5a"/><ellipse cx="49.8" cy="334.73" rx="4.3" ry="3.7" fill="url(#nt2)" stroke="#2e2e2e" stroke-width="0.8" transform="rotate(-12 49.8 334.73)"/><rect x="52.1" y="324.53" width="2.5" height="11.5" rx="0.8" fill="#3a3e44"/><rect x="53.1" y="325.53" width="1.2" height="10" fill="#9aa0a8"/><rect x="33" y="347" width="1" height="1" fill="#5a5a5a"/><rect x="35" y="347" width="1" height="1" fill="#5a5a5a"/><rect x="37" y="347" width="1" height="1" fill="#5a5a5a"/><rect x="39" y="347" width="1" height="1" fill="#5a5a5a"/><ellipse cx="49.8" cy="350.06" rx="4.3" ry="3.7" fill="url(#nt2)" stroke="#2e2e2e" stroke-width="0.8" transform="rotate(-12 49.8 350.06)"/><rect x="52.1" y="339.86" width="2.5" height="11.5" rx="0.8" fill="#3a3e44"/><rect x="53.1" y="340.86" width="1.2" height="10" fill="#9aa0a8"/><rect x="33" y="363" width="1" height="1" fill="#5a5a5a"/><rect x="35" y="363" width="1" height="1" fill="#5a5a5a"/><rect x="37" y="363" width="1" height="1" fill="#5a5a5a"/><rect x="39" y="363" width="1" height="1" fill="#5a5a5a"/><ellipse cx="49.8" cy="365.39" rx="4.3" ry="3.7" fill="url(#nt2)" stroke="#2e2e2e" stroke-width="0.8" transform="rotate(-12 49.8 365.39)"/><rect x="52.1" y="355.19" width="2.5" height="11.5" rx="0.8" fill="#3a3e44"/><rect x="53.1" y="356.19" width="1.2" height="10" fill="#9aa0a8"/><rect x="33" y="378" width="1" height="1" fill="#5a5a5a"/><rect x="35" y="378" width="1" height="1" fill="#5a5a5a"/><rect x="37" y="378" width="1" height="1" fill="#5a5a5a"/><rect x="39" y="378" width="1" height="1" fill="#5a5a5a"/><ellipse cx="49.8" cy="380.72" rx="4.3" ry="3.7" fill="url(#nt2)" stroke="#2e2e2e" stroke-width="0.8" transform="rotate(-12 49.8 380.72)"/><rect x="52.1" y="370.52" width="2.5" height="11.5" rx="0.8" fill="#3a3e44"/><rect x="53.1" y="371.52" width="1.2" height="10" fill="#9aa0a8"/><rect x="33" y="393" width="1" height="1" fill="#5a5a5a"/><rect x="35" y="393" width="1" height="1" fill="#5a5a5a"/><rect x="37" y="393" width="1" height="1" fill="#5a5a5a"/><rect x="39" y="393" width="1" height="1" fill="#5a5a5a"/><ellipse cx="49.8" cy="396.05" rx="4.3" ry="3.7" fill="url(#nt2)" stroke="#2e2e2e" stroke-width="0.8" transform="rotate(-12 49.8 396.05)"/><rect x="52.1" y="385.85" width="2.5" height="11.5" rx="0.8" fill="#3a3e44"/><rect x="53.1" y="386.85" width="1.2" height="10" fill="#9aa0a8"/><rect x="33" y="409" width="1" height="1" fill="#5a5a5a"/><rect x="35" y="409" width="1" height="1" fill="#5a5a5a"/><rect x="37" y="409" width="1" height="1" fill="#5a5a5a"/><rect x="39" y="409" width="1" height="1" fill="#5a5a5a"/><ellipse cx="49.8" cy="411.38" rx="4.3" ry="3.7" fill="url(#nt2)" stroke="#2e2e2e" stroke-width="0.8" transform="rotate(-12 49.8 411.38)"/><rect x="52.1" y="401.18" width="2.5" height="11.5" rx="0.8" fill="#3a3e44"/><rect x="53.1" y="402.18" width="1.2" height="10" fill="#9aa0a8"/><rect x="33" y="424" width="1" height="1" fill="#5a5a5a"/><rect x="35" y="424" width="1" height="1" fill="#5a5a5a"/><rect x="37" y="424" width="1" height="1" fill="#5a5a5a"/><rect x="39" y="424" width="1" height="1" fill="#5a5a5a"/><ellipse cx="49.8" cy="426.71" rx="4.3" ry="3.7" fill="url(#nt2)" stroke="#2e2e2e" stroke-width="0.8" transform="rotate(-12 49.8 426.71)"/><rect x="52.1" y="416.51" width="2.5" height="11.5" rx="0.8" fill="#3a3e44"/><rect x="53.1" y="417.51" width="1.2" height="10" fill="#9aa0a8"/><rect x="33" y="439" width="1" height="1" fill="#5a5a5a"/><rect x="35" y="439" width="1" height="1" fill="#5a5a5a"/><rect x="37" y="439" width="1" height="1" fill="#5a5a5a"/><rect x="39" y="439" width="1" height="1" fill="#5a5a5a"/><ellipse cx="49.8" cy="442.04" rx="4.3" ry="3.7" fill="url(#nt2)" stroke="#2e2e2e" stroke-width="0.8" transform="rotate(-12 49.8 442.04)"/><rect x="52.1" y="431.84" width="2.5" height="11.5" rx="0.8" fill="#3a3e44"/><rect x="53.1" y="432.84" width="1.2" height="10" fill="#9aa0a8"/><rect x="33" y="455" width="1" height="1" fill="#5a5a5a"/><rect x="35" y="455" width="1" height="1" fill="#5a5a5a"/><rect x="37" y="455" width="1" height="1" fill="#5a5a5a"/><rect x="39" y="455" width="1" height="1" fill="#5a5a5a"/><ellipse cx="49.8" cy="457.37" rx="4.3" ry="3.7" fill="url(#nt2)" stroke="#2e2e2e" stroke-width="0.8" transform="rotate(-12 49.8 457.37)"/><rect x="52.1" y="447.17" width="2.5" height="11.5" rx="0.8" fill="#3a3e44"/><rect x="53.1" y="448.17" width="1.2" height="10" fill="#9aa0a8"/><rect x="6.5" y="465.60" width="8.5" height="8.5" rx="1" fill="#8c8c8c" stroke="#5e5e5e" stroke-width="1"/><path d="M8.5,470.10 H13 M10.75,467.90 V472.30" stroke="#c8c8c8" stroke-width="1"/><rect x="17" y="470" width="1" height="1" fill="#5a5a5a"/><rect x="19" y="470" width="1" height="1" fill="#5a5a5a"/><rect x="21" y="470" width="1" height="1" fill="#5a5a5a"/><path d="M24,463.29999999999995 H30 L31.5,464.79999999999995 H37.5 V475.79999999999995 H24 Z" fill="url(#fd)" stroke="#1e2226" stroke-width="0.9"/><rect x="6.5" y="480.93" width="8.5" height="8.5" rx="1" fill="#8c8c8c" stroke="#5e5e5e" stroke-width="1"/><path d="M8.5,485.43 H13 M10.75,483.23 V487.63" stroke="#c8c8c8" stroke-width="1"/><rect x="17" y="485" width="1" height="1" fill="#5a5a5a"/><rect x="19" y="485" width="1" height="1" fill="#5a5a5a"/><rect x="21" y="485" width="1" height="1" fill="#5a5a5a"/><path d="M24,478.6300000000001 H30 L31.5,480.1300000000001 H37.5 V491.1300000000001 H24 Z" fill="url(#fd)" stroke="#1e2226" stroke-width="0.9"/><rect x="6.5" y="496.26" width="8.5" height="8.5" rx="1" fill="#8c8c8c" stroke="#5e5e5e" stroke-width="1"/><path d="M8.5,500.76 H13 M10.75,498.56 V502.96" stroke="#c8c8c8" stroke-width="1"/><rect x="17" y="501" width="1" height="1" fill="#5a5a5a"/><rect x="19" y="501" width="1" height="1" fill="#5a5a5a"/><rect x="21" y="501" width="1" height="1" fill="#5a5a5a"/><path d="M24,493.96000000000004 H30 L31.5,495.46000000000004 H37.5 V506.46000000000004 H24 Z" fill="url(#fd)" stroke="#1e2226" stroke-width="0.9"/><rect x="6.5" y="511.59" width="8.5" height="8.5" rx="1" fill="#8c8c8c" stroke="#5e5e5e" stroke-width="1"/><path d="M8.5,516.09 H13 M10.75,513.89 V518.29" stroke="#c8c8c8" stroke-width="1"/><rect x="17" y="516" width="1" height="1" fill="#5a5a5a"/><rect x="19" y="516" width="1" height="1" fill="#5a5a5a"/><rect x="21" y="516" width="1" height="1" fill="#5a5a5a"/><path d="M24,509.28999999999996 H30 L31.5,510.78999999999996 H37.5 V521.79 H24 Z" fill="url(#fd)" stroke="#1e2226" stroke-width="0.9"/><rect x="6.5" y="526.92" width="8.5" height="8.5" rx="1" fill="#8c8c8c" stroke="#5e5e5e" stroke-width="1"/><path d="M8.5,531.42 H13 M10.75,529.22 V533.62" stroke="#c8c8c8" stroke-width="1"/><rect x="17" y="531" width="1" height="1" fill="#5a5a5a"/><rect x="19" y="531" width="1" height="1" fill="#5a5a5a"/><rect x="21" y="531" width="1" height="1" fill="#5a5a5a"/><path d="M24,524.6200000000001 H30 L31.5,526.1200000000001 H37.5 V537.1200000000001 H24 Z" fill="url(#fd)" stroke="#1e2226" stroke-width="0.9"/></svg><div class="t" style="left:73.90px;top:163.40px;font-size:9.8px;color:#dddddd;transform:scaleX(0.9275);transform-origin:0 0;-webkit-text-stroke:0.25px #dddddd;">basses</div><div class="t" style="left:73.90px;top:178.73px;font-size:9.8px;color:#dddddd;transform:scaleX(0.9843);transform-origin:0 0;-webkit-text-stroke:0.25px #dddddd;">bassloopes</div><div class="t" style="left:73.90px;top:194.06px;font-size:9.8px;color:#dddddd;transform:scaleX(1.0178);transform-origin:0 0;-webkit-text-stroke:0.25px #dddddd;">beats</div><div class="t" style="left:73.90px;top:209.39px;font-size:9.8px;color:#dddddd;transform:scaleX(1.0210);transform-origin:0 0;-webkit-text-stroke:0.25px #dddddd;">drums</div><div class="t" style="left:73.90px;top:224.72px;font-size:9.8px;color:#dddddd;transform:scaleX(1.0448);transform-origin:0 0;-webkit-text-stroke:0.25px #dddddd;">drumsynth</div><div class="t" style="left:73.90px;top:240.05px;font-size:9.8px;color:#dddddd;transform:scaleX(1.0874);transform-origin:0 0;-webkit-text-stroke:0.25px #dddddd;">effects</div><div class="t" style="left:73.90px;top:255.38px;font-size:9.8px;color:#dddddd;transform:scaleX(1.0444);transform-origin:0 0;-webkit-text-stroke:0.25px #dddddd;">instruments</div><div class="t" style="left:93.30px;top:270.71px;font-size:9.8px;color:#dddddd;transform:scaleX(0.9417);transform-origin:0 0;-webkit-text-stroke:0.25px #dddddd;">--- Fichiers usine ---</div><div class="t" style="left:93.30px;top:286.04px;font-size:9.8px;color:#dddddd;transform:scaleX(0.9701);transform-origin:0 0;-webkit-text-stroke:0.25px #dddddd;">bassslap01.ogg</div><div class="t" style="left:93.30px;top:301.37px;font-size:9.8px;color:#dddddd;transform:scaleX(0.9701);transform-origin:0 0;-webkit-text-stroke:0.25px #dddddd;">bassslap02.ogg</div><div class="t" style="left:93.30px;top:316.70px;font-size:9.8px;color:#dddddd;transform:scaleX(1.0133);transform-origin:0 0;-webkit-text-stroke:0.25px #dddddd;">cello01.ogg</div><div class="t" style="left:93.30px;top:332.03px;font-size:9.8px;color:#dddddd;transform:scaleX(0.9921);transform-origin:0 0;-webkit-text-stroke:0.25px #dddddd;">church_organ01.ogg</div><div class="t" style="left:93.30px;top:347.36px;font-size:9.8px;color:#dddddd;transform:scaleX(0.9921);transform-origin:0 0;-webkit-text-stroke:0.25px #dddddd;">church_organ02.ogg</div><div class="t" style="left:93.30px;top:362.69px;font-size:9.8px;color:#dddddd;transform:scaleX(0.9921);transform-origin:0 0;-webkit-text-stroke:0.25px #dddddd;">church_organ03.ogg</div><div class="t" style="left:93.30px;top:378.02px;font-size:9.8px;color:#dddddd;transform:scaleX(0.9855);transform-origin:0 0;-webkit-text-stroke:0.25px #dddddd;">church_organ04.ogg</div><div class="t" style="left:93.30px;top:393.35px;font-size:9.8px;color:#dddddd;transform:scaleX(0.9857);transform-origin:0 0;-webkit-text-stroke:0.25px #dddddd;">e_organ01.ogg</div><div class="t" style="left:93.30px;top:408.68px;font-size:9.8px;color:#dddddd;transform:scaleX(0.9777);transform-origin:0 0;-webkit-text-stroke:0.25px #dddddd;">e_piano_accord01.ogg</div><div class="t" style="left:93.30px;top:424.01px;font-size:9.8px;color:#dddddd;transform:scaleX(0.9777);transform-origin:0 0;-webkit-text-stroke:0.25px #dddddd;">e_piano_accord02.ogg</div><div class="t" style="left:93.30px;top:439.34px;font-size:9.8px;color:#ffffff;transform:scaleX(1.0557);transform-origin:0 0;-webkit-text-stroke:0.25px #ffffff;">flute01.ogg</div><div class="t" style="left:93.30px;top:454.67px;font-size:9.8px;color:#dddddd;transform:scaleX(1.0039);transform-origin:0 0;-webkit-text-stroke:0.25px #dddddd;">harpsichord01.ogg</div><div class="t" style="left:93.30px;top:470.00px;font-size:9.8px;color:#dddddd;transform:scaleX(1.0027);transform-origin:0 0;-webkit-text-stroke:0.25px #dddddd;">piano01.ogg</div><div class="t" style="left:93.30px;top:485.33px;font-size:9.8px;color:#dddddd;transform:scaleX(1.0027);transform-origin:0 0;-webkit-text-stroke:0.25px #dddddd;">piano02.ogg</div><div class="t" style="left:93.30px;top:500.66px;font-size:9.8px;color:#dddddd;transform:scaleX(1.0168);transform-origin:0 0;-webkit-text-stroke:0.25px #dddddd;">steel_guitar01.ogg</div><div class="t" style="left:93.30px;top:515.99px;font-size:9.8px;color:#dddddd;transform:scaleX(1.0204);transform-origin:0 0;-webkit-text-stroke:0.25px #dddddd;">steel_guitar_heavy_distorted01....</div><div class="t" style="left:93.30px;top:531.32px;font-size:9.8px;color:#dddddd;transform:scaleX(1.0316);transform-origin:0 0;-webkit-text-stroke:0.25px #dddddd;">steel_guitar_medium_distorted0...</div><div class="t" style="left:93.30px;top:546.65px;font-size:9.8px;color:#dddddd;transform:scaleX(1.0343);transform-origin:0 0;-webkit-text-stroke:0.25px #dddddd;">steel_guitar_slight_distorted01.o...</div><div class="t" style="left:93.30px;top:561.98px;font-size:9.8px;color:#dddddd;transform:scaleX(1.0443);transform-origin:0 0;-webkit-text-stroke:0.25px #dddddd;">trumpet01.ogg</div><div class="t" style="left:93.30px;top:577.31px;font-size:9.8px;color:#dddddd;transform:scaleX(1.0147);transform-origin:0 0;-webkit-text-stroke:0.25px #dddddd;">violin_double_stop01.ogg</div><div class="t" style="left:93.30px;top:592.64px;font-size:9.8px;color:#dddddd;transform:scaleX(1.0239);transform-origin:0 0;-webkit-text-stroke:0.25px #dddddd;">violin_fingered01.ogg</div><div class="t" style="left:93.30px;top:607.97px;font-size:9.8px;color:#dddddd;transform:scaleX(1.0074);transform-origin:0 0;-webkit-text-stroke:0.25px #dddddd;">violin_pizzicato01.ogg</div><div class="t" style="left:73.90px;top:623.30px;font-size:9.8px;color:#dddddd;transform:scaleX(1.0791);transform-origin:0 0;-webkit-text-stroke:0.25px #dddddd;">latin</div><div class="t" style="left:73.90px;top:638.63px;font-size:9.8px;color:#dddddd;transform:scaleX(0.9831);transform-origin:0 0;-webkit-text-stroke:0.25px #dddddd;">misc</div><div class="t" style="left:73.90px;top:653.96px;font-size:9.8px;color:#dddddd;transform:scaleX(0.9651);transform-origin:0 0;-webkit-text-stroke:0.25px #dddddd;">shapes</div><div class="t" style="left:73.90px;top:669.29px;font-size:9.8px;color:#dddddd;transform:scaleX(1.0042);transform-origin:0 0;-webkit-text-stroke:0.25px #dddddd;">stringsnpads</div><div class="t" style="left:73.90px;top:684.62px;font-size:9.8px;color:#dddddd;transform:scaleX(1.0722);transform-origin:0 0;-webkit-text-stroke:0.25px #dddddd;">waveforms</div><svg class="a" style="left:260px;top:408px;" width="5" height="280" viewBox="0 0 5 280"><defs><pattern id="spl" patternUnits="userSpaceOnUse" width="5" height="4.8" x="0" y="0"><path d="M1.2,3.6 L4,0.8 V3.6 Z" fill="#f4f4f4"/><path d="M4,0.8 L4.8,0.8 V3.8 H1.2 V3.6 H4 Z" fill="#2e3640"/></pattern></defs><rect width="5" height="280" fill="url(#spl)"/></svg><div class="a" style="left:269px;top:120px;width:575px;height:286px;background:#5b6573;border:1px solid #30353c;border-radius:3px 3px 0 0"></div><div class="a" style="left:270px;top:120px;width:573px;height:22px;background:linear-gradient(#3d4d89,#6373ab);border-radius:2px 2px 0 0;box-shadow:inset 0 1px 0 #7585bd"></div><div class="t" style="left:458.00px;top:122.31px;font-size:17px;color:#ffffff;font-weight:bold;transform:scaleX(1.0270);transform-origin:0 0;">Éditeur de morceau</div><svg class="a" style="left:273px;top:125px;" width="16" height="12" viewBox="0 0 16 12"><rect x="0" y="0.40" width="16" height="3.20" rx="0.8" fill="#111"/><rect x="0.6" y="1.00" width="5.60" height="2.00" fill="#5a6470"/><rect x="10.40" y="1.00" width="5.28" height="2.00" fill="#3c3c3c"/><rect x="0" y="4.40" width="16" height="3.20" rx="0.8" fill="#111"/><rect x="0.6" y="5.00" width="5.60" height="2.00" fill="#5a6470"/><rect x="10.40" y="5.00" width="5.28" height="2.00" fill="#3c3c3c"/><rect x="0" y="8.40" width="16" height="3.20" rx="0.8" fill="#111"/><rect x="0.6" y="9.00" width="5.60" height="2.00" fill="#5a6470"/><rect x="10.40" y="9.00" width="5.28" height="2.00" fill="#3c3c3c"/></svg><div class="a" style="left:790px;top:124px;width:15px;height:15px;border-radius:3px;background:linear-gradient(#5a6aa2,#6878ae);border:1px solid #3a4780"></div><div class="a" style="left:807px;top:124px;width:15px;height:15px;border-radius:3px;background:linear-gradient(#5a6aa2,#6878ae);border:1px solid #3a4780"></div><div class="a" style="left:824px;top:124px;width:15px;height:15px;border-radius:3px;background:linear-gradient(#5a6aa2,#6878ae);border:1px solid #3a4780"></div><div class="a" style="left:794px;top:133px;width:7px;height:2px;background:#222"></div><div class="a" style="left:811px;top:127px;width:7px;height:7px;border:1.5px solid #222"></div><svg class="a" style="left:827px;top:127px;" width="9" height="9" viewBox="0 0 9 9"><path d="M1,1 L8,8 M8,1 L1,8" stroke="#222" stroke-width="1.6"/></svg><div class="a" style="left:273px;top:142px;width:567px;height:30px;background:linear-gradient(#949da3,#6f7880)"></div><div class="a" style="left:279px;top:143px;width:113px;height:28px;border-radius:9px;background:#aeaeae"></div><div class="tb" style="left:279px;top:143px;width:28px;height:28px;border-radius:9px 3px 3px 9px"></div><div class="tb" style="left:307px;top:143px;width:28px;height:28px"></div><div class="tb" style="left:336px;top:143px;width:28px;height:28px"></div><div class="tb" style="left:364px;top:143px;width:28px;height:28px;border-radius:3px 9px 9px 3px"></div><div class="tb" style="left:403px;top:143px;width:27.5px;height:28px"></div><div class="tb" style="left:432px;top:143px;width:27.5px;height:28px"></div><div class="tb" style="left:461px;top:143px;width:27.5px;height:28px"></div><div class="tb" style="left:528px;top:143px;width:27.5px;height:28px"></div><div class="tb" style="left:566px;top:143px;width:27.5px;height:28px"></div><div class="tb" style="left:595px;top:143px;width:27.5px;height:28px"></div><div class="tb" style="left:624px;top:143px;width:27.5px;height:28px"></div><div class="tb" style="left:499px;top:143px;width:28px;height:28px;background:radial-gradient(ellipse at 40% 35%,#e4e4e4,#cdcdcd 60%,#b6b6b6);box-shadow:inset 0 0 0 1px #2a2a2a"></div><svg class="a" style="left:279px;top:143px;" width="28" height="28" viewBox="0 0 28 28"><defs><linearGradient id="pl" x1="0" y1="0" x2="1" y2="1"><stop offset="0" stop-color="#555"/><stop offset="1" stop-color="#111"/></linearGradient></defs><path d="M7,7.5 L21,14.5 L7,21.5 Z" fill="url(#pl)" stroke="#000" stroke-width="0.8"/></svg><svg class="a" style="left:307px;top:143px;" width="28" height="28" viewBox="0 0 28 28"><circle cx="14.25" cy="14" r="6.7" fill="#6a7480" stroke="#58616b" stroke-width="0.6"/></svg><svg class="a" style="left:336px;top:143px;" width="28" height="28" viewBox="0 0 28 28"><circle cx="17.5" cy="14" r="6.5" fill="#6a7480"/><path d="M4.3,7.5 L17.5,14 L4.3,20.5 Z" fill="#6e7884" stroke="#5a636d" stroke-width="0.6"/></svg><svg class="a" style="left:364px;top:143px;" width="28" height="28" viewBox="0 0 28 28"><defs><linearGradient id="stp" x1="0" y1="0" x2="0" y2="1"><stop offset="0" stop-color="#666"/><stop offset="1" stop-color="#111"/></linearGradient></defs><rect x="8" y="7.4" width="14" height="14" rx="1" fill="url(#stp)" stroke="#000" stroke-width="0.8"/></svg><svg class="a" style="left:403px;top:143px;" width="28" height="28" viewBox="0 0 28 28"><rect x="4.00" y="6.50" width="4.6" height="4.6" rx="0.6" fill="#3c3c3c" stroke="#222" stroke-width="0.5"/><rect x="9.90" y="6.50" width="4.6" height="4.6" rx="0.6" fill="#1f8898" stroke="#222" stroke-width="0.5"/><rect x="15.80" y="6.50" width="4.6" height="4.6" rx="0.6" fill="#3c3c3c" stroke="#222" stroke-width="0.5"/><rect x="4.00" y="12.40" width="4.6" height="4.6" rx="0.6" fill="#1f8898" stroke="#222" stroke-width="0.5"/><rect x="9.90" y="12.40" width="4.6" height="4.6" rx="0.6" fill="#3c3c3c" stroke="#222" stroke-width="0.5"/><rect x="15.80" y="12.40" width="4.6" height="4.6" rx="0.6" fill="#1f8898" stroke="#222" stroke-width="0.5"/><path d="M19.5,16 V24 M15.5,20 H23.5" stroke="#3a3a3a" stroke-width="3"/><path d="M19.5,16.6 V23.4 M16.1,20 H22.9" stroke="#f0f0f0" stroke-width="1.7"/></svg><svg class="a" style="left:432px;top:143px;" width="28" height="28" viewBox="0 0 28 28"><defs><linearGradient id="gn" x1="0" y1="0" x2="0" y2="1"><stop offset="0" stop-color="#50f070"/><stop offset="1" stop-color="#18b040"/></linearGradient></defs><rect x="15" y="5.7" width="2.7" height="11" fill="#18a040" stroke="#0e5a24" stroke-width="0.5"/><ellipse cx="11.2" cy="17.2" rx="6.3" ry="4" fill="url(#gn)" stroke="#0e5a24" stroke-width="0.7" transform="rotate(-8 11.2 17.2)"/><path d="M18.7,15.2 V23.2 M14.7,19.2 H22.7" stroke="#3a3a3a" stroke-width="3"/><path d="M18.7,15.799999999999999 V22.599999999999998 M15.299999999999999,19.2 H22.099999999999998" stroke="#f0f0f0" stroke-width="1.7"/></svg><svg class="a" style="left:461px;top:143px;" width="28" height="28" viewBox="0 0 28 28"><defs><linearGradient id="au" x1="0" y1="0" x2="1" y2="1"><stop offset="0" stop-color="#c8d4ff"/><stop offset="1" stop-color="#98acf0"/></linearGradient></defs><path d="M4,8.5 L8,5.7 L17.5,12.7 L22,8.5 L22.3,21 H4 Z" fill="url(#au)" stroke="#2a2a2a" stroke-width="0.9" stroke-linejoin="round"/><path d="M17.7,14.5 V22.5 M13.7,18.5 H21.7" stroke="#3a3a3a" stroke-width="3"/><path d="M17.7,15.1 V21.9 M14.299999999999999,18.5 H21.099999999999998" stroke="#f0f0f0" stroke-width="1.7"/></svg><svg class="a" style="left:499px;top:143px;" width="28" height="28" viewBox="0 0 28 28"><path d="M5,5 L23,23" stroke="#3a3a3a" stroke-width="2.6" stroke-linecap="round"/><path d="M5.6,5.6 L22.4,22.4" stroke="#9a9a9a" stroke-width="1"/><path d="M4.3,4.3 L6.8,5.2 L5.2,6.8 Z" fill="#111"/></svg><svg class="a" style="left:528px;top:143px;" width="28" height="28" viewBox="0 0 28 28"><rect x="6.5" y="6" width="14" height="15" rx="1" fill="none" stroke="#222" stroke-width="1.3" stroke-dasharray="2 1.5"/></svg><svg class="a" style="left:566px;top:143px;" width="28" height="28" viewBox="0 0 28 28"><defs><linearGradient id="ga" x1="0" y1="0" x2="0" y2="1"><stop offset="0" stop-color="#3ae070"/><stop offset="1" stop-color="#18a040"/></linearGradient></defs><path d="M4.5,11.5 H13 V7.5 L21,14 L13,20.5 V16.5 H4.5 Z" fill="url(#ga)" stroke="#0e5a24" stroke-width="0.8"/></svg><svg class="a" style="left:595px;top:143px;" width="28" height="28" viewBox="0 0 28 28"><path d="M6,6.5 L14,14 L22,6.5 V21.5 L14,14 L6,21.5 Z" fill="#555" stroke="#333" stroke-width="0.8"/></svg><svg class="a" style="left:624px;top:143px;" width="28" height="28" viewBox="0 0 28 28"><rect x="6" y="7.5" width="1.8" height="13" fill="#111"/><path d="M9.5,14 L15,9.5 V18.5 Z M15.5,14 L21,9.5 V18.5 Z" fill="#111"/></svg><svg class="a" style="left:665px;top:144px;" width="26" height="26" viewBox="0 0 26 26"><defs><radialGradient id="ln" cx="0.4" cy="0.35" r="0.7"><stop offset="0" stop-color="#d8f4f4"/><stop offset="1" stop-color="#5aa8b0"/></radialGradient></defs><path d="M15,15 L22.5,22.5" stroke="#333" stroke-width="3.2" stroke-linecap="round"/><path d="M15,15 L22,22" stroke="#aaa" stroke-width="1.4" stroke-linecap="round"/><circle cx="9.5" cy="9.5" r="7.8" fill="url(#ln)" stroke="#555" stroke-width="1.4"/></svg><div class="a" style="left:694px;top:147px;width:76px;height:20px;border-radius:3px;background:linear-gradient(#3a3a3a,#1a1a1a 45%,#2a2a2a);border:1px solid #111"></div><div class="a" style="left:751px;top:148px;width:1px;height:18px;background:#0a0a0a"></div><svg class="a" style="left:757px;top:151px;" width="8" height="12" viewBox="0 0 8 12"><path d="M7,0.5 V11.5 L0.5,6 Z" fill="#d8d8d8"/></svg><div class="t" style="left:699.30px;top:150.84px;font-size:12px;color:#eeeeee;transform:scaleX(0.9384);transform-origin:0 0;">100%</div><div class="a" style="left:273px;top:172px;width:567px;height:18px;background:linear-gradient(#7f8a97,#58616c)"></div><div class="a" style="left:273px;top:190px;width:554px;height:29px;background:#525b67"></div><div class="a" style="left:273px;top:219px;width:554px;height:170px;background:#4a5360;border-top:2px solid #3f4651"></div><div class="a" style="left:563px;top:190px;width:264px;height:29.5px;background:linear-gradient(#1e1e1e,#111 45%,#151515)"></div><div class="a" style="left:624.2px;top:190px;width:61.2px;height:29.5px;background:linear-gradient(#2a2a2a,#1f1f1f 45%,#232323)"></div><div class="a" style="left:746.6px;top:190px;width:61.2px;height:29.5px;background:linear-gradient(#2a2a2a,#1f1f1f 45%,#232323)"></div><div class="a" style="left:578.40px;top:190px;width:1.3px;height:29.5px;background:#3a3a3a"></div><div class="a" style="left:593.70px;top:190px;width:1.3px;height:29.5px;background:#3a3a3a"></div><div class="a" style="left:609.00px;top:190px;width:1.3px;height:29.5px;background:#3a3a3a"></div><div class="a" style="left:624.30px;top:190px;width:1.3px;height:29.5px;background:#3a3a3a"></div><div class="a" style="left:639.60px;top:190px;width:1.3px;height:29.5px;background:#3a3a3a"></div><div class="a" style="left:654.90px;top:190px;width:1.3px;height:29.5px;background:#3a3a3a"></div><div class="a" style="left:670.20px;top:190px;width:1.3px;height:29.5px;background:#3a3a3a"></div><div class="a" style="left:685.50px;top:190px;width:1.3px;height:29.5px;background:#3a3a3a"></div><div class="a" style="left:700.80px;top:190px;width:1.3px;height:29.5px;background:#3a3a3a"></div><div class="a" style="left:716.10px;top:190px;width:1.3px;height:29.5px;background:#3a3a3a"></div><div class="a" style="left:731.40px;top:190px;width:1.3px;height:29.5px;background:#3a3a3a"></div><div class="a" style="left:746.70px;top:190px;width:1.3px;height:29.5px;background:#3a3a3a"></div><div class="a" style="left:762.00px;top:190px;width:1.3px;height:29.5px;background:#3a3a3a"></div><div class="a" style="left:777.30px;top:190px;width:1.3px;height:29.5px;background:#3a3a3a"></div><div class="a" style="left:792.60px;top:190px;width:1.3px;height:29.5px;background:#3a3a3a"></div><div class="a" style="left:807.90px;top:190px;width:1.3px;height:29.5px;background:#3a3a3a"></div><div class="a" style="left:823.20px;top:190px;width:1.3px;height:29.5px;background:#3a3a3a"></div><div class="a" style="left:578px;top:177px;width:2px;height:8px;background:linear-gradient(90deg,#e0e0e0,#b8b8b8)"></div><div class="a" style="left:593px;top:177px;width:2px;height:8px;background:linear-gradient(90deg,#e0e0e0,#b8b8b8)"></div><div class="a" style="left:609px;top:177px;width:2px;height:8px;background:linear-gradient(90deg,#e0e0e0,#b8b8b8)"></div><div class="a" style="left:624px;top:177px;width:2px;height:8px;background:linear-gradient(90deg,#e0e0e0,#b8b8b8)"></div><div class="a" style="left:639px;top:177px;width:2px;height:8px;background:linear-gradient(90deg,#e0e0e0,#b8b8b8)"></div><div class="a" style="left:654px;top:177px;width:2px;height:8px;background:linear-gradient(90deg,#e0e0e0,#b8b8b8)"></div><div class="a" style="left:670px;top:177px;width:2px;height:8px;background:linear-gradient(90deg,#e0e0e0,#b8b8b8)"></div><div class="a" style="left:685px;top:177px;width:2px;height:8px;background:linear-gradient(90deg,#e0e0e0,#b8b8b8)"></div><div class="a" style="left:700px;top:177px;width:2px;height:8px;background:linear-gradient(90deg,#e0e0e0,#b8b8b8)"></div><div class="a" style="left:716px;top:177px;width:2px;height:8px;background:linear-gradient(90deg,#e0e0e0,#b8b8b8)"></div><div class="a" style="left:731px;top:177px;width:2px;height:8px;background:linear-gradient(90deg,#e0e0e0,#b8b8b8)"></div><div class="a" style="left:746px;top:177px;width:2px;height:8px;background:linear-gradient(90deg,#e0e0e0,#b8b8b8)"></div><div class="a" style="left:762px;top:177px;width:2px;height:8px;background:linear-gradient(90deg,#e0e0e0,#b8b8b8)"></div><div class="a" style="left:777px;top:177px;width:2px;height:8px;background:linear-gradient(90deg,#e0e0e0,#b8b8b8)"></div><div class="a" style="left:792px;top:177px;width:2px;height:8px;background:linear-gradient(90deg,#e0e0e0,#b8b8b8)"></div><div class="a" style="left:808px;top:177px;width:2px;height:8px;background:linear-gradient(90deg,#e0e0e0,#b8b8b8)"></div><div class="a" style="left:823px;top:177px;width:2px;height:8px;background:linear-gradient(90deg,#e0e0e0,#b8b8b8)"></div><div class="a" style="left:838px;top:177px;width:2px;height:8px;background:linear-gradient(90deg,#e0e0e0,#b8b8b8)"></div><div class="t" style="left:629.50px;top:178.95px;font-size:7.5px;color:#c0c6ce;transform:scaleX(1.0788);transform-origin:0 0;">5</div><div class="t" style="left:691.00px;top:178.95px;font-size:7.5px;color:#c0c6ce;transform:scaleX(1.0788);transform-origin:0 0;">9</div><div class="t" style="left:750.80px;top:178.95px;font-size:7.5px;color:#c0c6ce;transform:scaleX(0.9350);transform-origin:0 0;">13</div><div class="t" style="left:813.00px;top:178.95px;font-size:7.5px;color:#c0c6ce;transform:scaleX(0.9110);transform-origin:0 0;">17</div><svg class="a" style="left:556px;top:174px;" width="30" height="14" viewBox="0 0 30 14"><path d="M1.3,0.7 V11.3 L7.5,6 Z" fill="#3a9870" opacity="0.85"/><rect x="6" y="0.7" width="2" height="10.6" fill="#c8c8c8"/><rect x="22.2" y="0.7" width="1.8" height="10.6" fill="#c8c8c8"/><path d="M28.4,0.7 V11.3 L23.8,6 Z" fill="#3a9870" opacity="0.85"/></svg><svg class="a" style="left:554.5px;top:180px;" width="18" height="10" viewBox="0 0 18 10"><path d="M0.3,0.4 L17,0.4 L8.6,9.5 Z" fill="#d8dcdc" opacity="0.92"/></svg><div class="a" style="left:562px;top:189px;width:2px;height:200px;background:#a4a4a4"></div><div class="a" style="left:827px;top:190px;width:13px;height:199px;background:#1a1a1a"></div><div class="a" style="left:828px;top:191px;width:12px;height:11px;background:#7e7e7e"></div><div class="a" style="left:828px;top:203px;width:12px;height:172px;background:#7a7a7a"></div><div class="a" style="left:828px;top:376px;width:12px;height:12px;background:#7e7e7e"></div><svg class="a" style="left:830px;top:193px;" width="8" height="8" viewBox="0 0 8 8"><path d="M0.5,6.5 L4,1.5 L7.5,6.5 Z" fill="#5a5a5a"/></svg><svg class="a" style="left:830px;top:379px;" width="8" height="8" viewBox="0 0 8 8"><path d="M0.5,1.5 L4,6.5 L7.5,1.5 Z" fill="#5a5a5a"/></svg><div class="a" style="left:273px;top:389px;width:567px;height:13px;background:#1a1a1a"></div><div class="a" style="left:274px;top:390px;width:12px;height:12px;background:#7e7e7e"></div><div class="a" style="left:287px;top:390px;width:540px;height:11px;background:#7a7a7a"></div><div class="a" style="left:828px;top:390px;width:12px;height:12px;background:#7e7e7e"></div><svg class="a" style="left:276px;top:392px;" width="8" height="8" viewBox="0 0 8 8"><path d="M6.5,0.5 L1.5,4 L6.5,7.5 Z" fill="#5a5a5a"/></svg><svg class="a" style="left:830px;top:392px;" width="8" height="8" viewBox="0 0 8 8"><path d="M1.5,0.5 L6.5,4 L1.5,7.5 Z" fill="#5a5a5a"/></svg><svg class="a" style="left:275px;top:191px;" width="9" height="27" viewBox="0 0 9 27"><path d="M0.5,1.0 h2.6 L0.5,3.6 Z" fill="#2a3038"/><path d="M3.1,1.0 v2.6 h-2.6 Z" fill="#a0a8b0"/><path d="M0.5,5.8 h2.6 L0.5,8.4 Z" fill="#2a3038"/><path d="M3.1,5.8 v2.6 h-2.6 Z" fill="#a0a8b0"/><path d="M0.5,10.6 h2.6 L0.5,13.2 Z" fill="#2a3038"/><path d="M3.1,10.6 v2.6 h-2.6 Z" fill="#a0a8b0"/><path d="M0.5,15.4 h2.6 L0.5,18.0 Z" fill="#2a3038"/><path d="M3.1,15.4 v2.6 h-2.6 Z" fill="#a0a8b0"/><path d="M0.5,20.2 h2.6 L0.5,22.8 Z" fill="#2a3038"/><path d="M3.1,20.2 v2.6 h-2.6 Z" fill="#a0a8b0"/><path d="M4.7,3.6 h2.6 L4.7,6.2 Z" fill="#2a3038"/><path d="M7.300000000000001,3.6 v2.6 h-2.6 Z" fill="#a0a8b0"/><path d="M4.7,8.4 h2.6 L4.7,11.0 Z" fill="#2a3038"/><path d="M7.300000000000001,8.4 v2.6 h-2.6 Z" fill="#a0a8b0"/><path d="M4.7,13.2 h2.6 L4.7,15.8 Z" fill="#2a3038"/><path d="M7.300000000000001,13.2 v2.6 h-2.6 Z" fill="#a0a8b0"/><path d="M4.7,18.0 h2.6 L4.7,20.6 Z" fill="#2a3038"/><path d="M7.300000000000001,18.0 v2.6 h-2.6 Z" fill="#a0a8b0"/><path d="M4.7,22.8 h2.6 L4.7,25.4 Z" fill="#2a3038"/><path d="M7.300000000000001,22.8 v2.6 h-2.6 Z" fill="#a0a8b0"/></svg><svg class="a" style="left:289px;top:198px;" width="16" height="16" viewBox="0 0 16 16"><defs><radialGradient id="gr" cx="0.5" cy="0.5" r="0.5"><stop offset="0" stop-color="#9af8a8"/><stop offset="0.6" stop-color="#3ae05a"/><stop offset="1" stop-color="#22b840"/></radialGradient></defs><g transform="translate(8.1,7.8)"><rect x="-1.4" y="-8.2" width="2.8" height="4" rx="0.5" fill="#2ed84e" transform="rotate(0)"/><rect x="-1.4" y="-8.2" width="2.8" height="4" rx="0.5" fill="#2ed84e" transform="rotate(30)"/><rect x="-1.4" y="-8.2" width="2.8" height="4" rx="0.5" fill="#2ed84e" transform="rotate(60)"/><rect x="-1.4" y="-8.2" width="2.8" height="4" rx="0.5" fill="#2ed84e" transform="rotate(90)"/><rect x="-1.4" y="-8.2" width="2.8" height="4" rx="0.5" fill="#2ed84e" transform="rotate(120)"/><rect x="-1.4" y="-8.2" width="2.8" height="4" rx="0.5" fill="#2ed84e" transform="rotate(150)"/><rect x="-1.4" y="-8.2" width="2.8" height="4" rx="0.5" fill="#2ed84e" transform="rotate(180)"/><rect x="-1.4" y="-8.2" width="2.8" height="4" rx="0.5" fill="#2ed84e" transform="rotate(210)"/><rect x="-1.4" y="-8.2" width="2.8" height="4" rx="0.5" fill="#2ed84e" transform="rotate(240)"/><rect x="-1.4" y="-8.2" width="2.8" height="4" rx="0.5" fill="#2ed84e" transform="rotate(270)"/><rect x="-1.4" y="-8.2" width="2.8" height="4" rx="0.5" fill="#2ed84e" transform="rotate(300)"/><rect x="-1.4" y="-8.2" width="2.8" height="4" rx="0.5" fill="#2ed84e" transform="rotate(330)"/><circle r="6.2" fill="url(#gr)"/><circle r="2" fill="#50585a"/></g></svg><div class="a" style="left:317px;top:199.7px;width:31.5px;height:8.5px;background:#4a4f55;border:1px solid #8a9096;border-radius:1px"></div><div class="a" style="left:318.5px;top:201px;width:14px;height:6px;background:linear-gradient(#b0ffc0,#48e068 60%,#38c858);box-shadow:0 0 2px #6af088"></div><div class="a" style="left:334px;top:201px;width:13px;height:6px;background:linear-gradient(#3a3a3a,#1e1e1e)"></div><svg class="a" style="left:355px;top:191px;" width="25" height="26" viewBox="0 0 25 26"><defs><linearGradient id="bn" x1="0" y1="0" x2="1" y2="1"><stop offset="0" stop-color="#ffffff"/><stop offset="1" stop-color="#a8b6cc"/></linearGradient></defs><path d="M11.8,19 V2.8 Q11.8,1.8 12.8,1.8 H22.5 Q23.6,1.8 23.1,2.9 L20.3,9.2 Q19.9,10 19,9.6 L16.3,8.6 V19 Z" fill="url(#bn)" stroke="#1a3a9a" stroke-width="1.3" stroke-linejoin="round"/><ellipse cx="8.6" cy="19.3" rx="7.6" ry="5.2" fill="url(#bn)" stroke="#1a3a9a" stroke-width="1.3" transform="rotate(-22 8.6 19.3)"/><rect x="12.6" y="12" width="3" height="6" fill="#e8eef6"/></svg><div class="t" style="left:382.70px;top:198.19px;font-size:11px;color:#c4cad0;transform:scaleX(1.0232);transform-origin:0 0;">flute01.ogg</div><div class="a" style="left:507px;top:192px;width:7px;height:25px;background:#4a525d;border:1px solid #3e454f"></div><svg class="a" style="left:515.3px;top:189.7px;" width="20" height="20" viewBox="0 0 20 20"><defs><radialGradient id="kn" cx="0.5" cy="0.6" r="0.6"><stop offset="0" stop-color="#44494e"/><stop offset="1" stop-color="#26292c"/></radialGradient></defs><circle cx="10" cy="10" r="8.3" fill="none" stroke="#6e767e" stroke-width="1.2"/><circle cx="10" cy="10" r="7" fill="url(#kn)"/><path d="M4.1,15.9 A8.4,8.4 0 0 1 9.3,1.6" fill="none" stroke="#f0f0f0" stroke-width="1.9"/><path d="M10.3,3.2 L10,9.5" stroke="#f4f4f4" stroke-width="1.8"/></svg><svg class="a" style="left:538.2px;top:189.7px;" width="20" height="20" viewBox="0 0 20 20"><defs><radialGradient id="kn" cx="0.5" cy="0.6" r="0.6"><stop offset="0" stop-color="#44494e"/><stop offset="1" stop-color="#26292c"/></radialGradient></defs><circle cx="10" cy="10" r="8.3" fill="none" stroke="#6e767e" stroke-width="1.2"/><circle cx="10" cy="10" r="7" fill="url(#kn)"/><path d="M10,3.2 V9.5" stroke="#f4f4f4" stroke-width="1.8"/></svg><div class="t" style="left:517.80px;top:210.10px;font-size:8.5px;color:#e8e8e8;transform:scaleX(0.9407);transform-origin:0 0;">VOL</div><div class="t" style="left:540.70px;top:210.10px;font-size:8.5px;color:#e8e8e8;transform:scaleX(0.9735);transform-origin:0 0;">PAN</div><div class="a" style="left:788px;top:511px;width:112px;height:177px;background:#5b6570;border-left:1px solid #333"></div><div class="a" style="left:788px;top:511px;width:112px;height:22px;background:linear-gradient(#7f7f7f,#747474);border-radius:3px 0 0 0;box-shadow:inset 0 1px 0 #a8a8a8, inset 1px 0 0 #8a8a8a"></div><svg class="a" style="left:790px;top:515px;" width="20" height="15" viewBox="0 0 20 15"><path d="M3.5,1 V11.125" stroke="#111" stroke-width="0.8999999999999999"/><rect x="1.7750000000000004" y="3.625" width="3.4499999999999997" height="3.75" rx="0.75" fill="#ddd" stroke="#111" stroke-width="0.675"/><path d="M8.375,1 V11.125" stroke="#111" stroke-width="0.8999999999999999"/><rect x="6.6499999999999995" y="7.375" width="3.4499999999999997" height="3.75" rx="0.75" fill="#ddd" stroke="#111" stroke-width="0.675"/><path d="M13.25,1 V11.125" stroke="#111" stroke-width="0.8999999999999999"/><rect x="11.524999999999999" y="3.625" width="3.4499999999999997" height="3.75" rx="0.75" fill="#ddd" stroke="#111" stroke-width="0.675"/></svg><div class="a" style="left:799px;top:541px;width:32px;height:147px;background:linear-gradient(90deg,#6e7884,#828c98);border:1px solid #2e333a"></div><svg class="a" style="left:804px;top:597px;" width="23" height="19" viewBox="0 0 23 19"><rect x="0.5" y="0.5" width="22" height="18" rx="2.5" fill="#0c110c" stroke="#050705"/><rect x="3.94" y="2.20" width="5.12" height="2.40" rx="0.8" fill="#1f2b20"/><rect x="8.10" y="3.64" width="2.40" height="5.56" rx="0.8" fill="#1f2b20"/><rect x="8.10" y="9.20" width="2.40" height="5.56" rx="0.8" fill="#1f2b20"/><rect x="3.94" y="13.80" width="5.12" height="2.40" rx="0.8" fill="#1f2b20"/><rect x="2.50" y="9.20" width="2.40" height="5.56" rx="0.8" fill="#1f2b20"/><rect x="2.50" y="3.64" width="2.40" height="5.56" rx="0.8" fill="#1f2b20"/><rect x="3.94" y="8.00" width="5.12" height="2.40" rx="0.8" fill="#1f2b20"/><rect x="13.94" y="2.20" width="5.12" height="2.40" rx="0.8" fill="#5ff59a"/><rect x="18.10" y="3.64" width="2.40" height="5.56" rx="0.8" fill="#5ff59a"/><rect x="18.10" y="9.20" width="2.40" height="5.56" rx="0.8" fill="#5ff59a"/><rect x="13.94" y="13.80" width="5.12" height="2.40" rx="0.8" fill="#5ff59a"/><rect x="12.50" y="9.20" width="2.40" height="5.56" rx="0.8" fill="#5ff59a"/><rect x="12.50" y="3.64" width="2.40" height="5.56" rx="0.8" fill="#5ff59a"/><rect x="13.94" y="8.00" width="5.12" height="2.40" rx="0.8" fill="#1f2b20"/></svg><div class="t" style="left:812.5px;top:680px;font-size:9px;font-weight:bold;color:#3cd068;transform:rotate(-90deg) scaleX(1.04);transform-origin:0 0">Général</div><div class="a" style="left:285px;top:216px;width:161px;height:98px;background:#c9c9c9;border:1px solid #dedede"></div><div class="a" style="left:289px;top:293px;width:154px;height:17px;background:#707070"></div><svg class="a" style="left:288px;top:220px;" width="18" height="18" viewBox="0 0 18 18"><defs><linearGradient id="pg9" x1="0" y1="0" x2="1" y2="1"><stop offset="0" stop-color="#ffffff"/><stop offset="1" stop-color="#c8c8c8"/></linearGradient></defs><path d="M3,1 H14 V13 L10,17 H3 Z" fill="url(#pg9)" stroke="#8a8a8a" stroke-width="0.6"/><path d="M10,17 L10.5,13.5 L14,13" fill="#e0e0e0" stroke="#9a9a9a" stroke-width="0.5"/></svg><svg class="a" style="left:288px;top:246px;" width="17" height="17" viewBox="0 0 17 17"><defs><linearGradient id="rx" x1="0" y1="0" x2="0" y2="1"><stop offset="0" stop-color="#ff6a6a"/><stop offset="1" stop-color="#c81818"/></linearGradient></defs><path d="M3.8,3.5 L13.2,12.8 M13.2,3.5 L3.8,12.8" stroke="#7a0a0a" stroke-width="4.4" stroke-linecap="round"/><path d="M3.8,3.5 L13.2,12.8 M13.2,3.5 L3.8,12.8" stroke="url(#rx)" stroke-width="3" stroke-linecap="round"/></svg><div class="t" style="left:308.00px;top:223.79px;font-size:11px;color:#222222;transform:scaleX(0.9848);transform-origin:0 0;-webkit-text-stroke:0.2px #222;">Cloner cette piste</div><div class="t" style="left:308.00px;top:248.99px;font-size:11px;color:#222222;transform:scaleX(0.9852);transform-origin:0 0;-webkit-text-stroke:0.2px #222;">Supprimer cette piste</div><div class="t" style="left:308.00px;top:272.79px;font-size:11px;color:#222222;transform:scaleX(0.9624);transform-origin:0 0;-webkit-text-stroke:0.2px #222;">Clear this track</div><div class="t" style="left:308.00px;top:296.69px;font-size:11px;color:#ffffff;font-weight:bold;transform:scaleX(1.0078);transform-origin:0 0;">MIDI</div><svg class="a" style="left:432px;top:297px;" width="6" height="9" viewBox="0 0 6 9"><path d="M0.5,0.5 L5.5,4.5 L0.5,8.5 Z" fill="#fff"/></svg><div class="a" style="left:445px;top:291px;width:90px;height:47px;background:#c9c9c9;border:1px solid #dedede"></div><div class="a" style="left:449px;top:294px;width:83px;height:17px;background:#707070"></div><div class="t" style="left:468.00px;top:297.89px;font-size:11px;color:#ffffff;font-weight:bold;transform:scaleX(0.9814);transform-origin:0 0;">Entrée</div><div class="t" style="left:468.00px;top:320.69px;font-size:11px;color:#222222;transform:scaleX(0.9744);transform-origin:0 0;-webkit-text-stroke:0.2px #222;">Sortie</div><svg class="a" style="left:522px;top:298px;" width="6" height="9" viewBox="0 0 6 9"><path d="M0.5,0.5 L5.5,4.5 L0.5,8.5 Z" fill="#fff"/></svg><svg class="a" style="left:522px;top:321px;" width="6" height="9" viewBox="0 0 6 9"><path d="M0.5,0.5 L5.5,4.5 L0.5,8.5 Z" fill="#111"/></svg><div class="a" style="left:534px;top:291px;width:243px;height:93px;background:#c9c9c9;border:1px solid #dedede"></div><div class="a" style="left:538px;top:364px;width:235px;height:17px;background:#707070"></div><div class="t" style="left:557.00px;top:298.79px;font-size:11px;color:#222222;transform:scaleX(0.9326);transform-origin:0 0;-webkit-text-stroke:0.2px #222;">0:0 System:Timer</div><div class="t" style="left:557.00px;top:321.99px;font-size:11px;color:#222222;transform:scaleX(0.9450);transform-origin:0 0;-webkit-text-stroke:0.2px #222;">0:1 System:Announce</div><div class="t" style="left:557.00px;top:344.19px;font-size:11px;color:#222222;transform:scaleX(0.9797);transform-origin:0 0;-webkit-text-stroke:0.2px #222;">14:0 Midi Through:Midi Through Port-0</div><div class="t" style="left:557.00px;top:367.29px;font-size:11px;color:#ffffff;font-weight:bold;transform:scaleX(0.9342);transform-origin:0 0;">20:0 Sylphyo:Sylphyo MIDI 1</div><svg class="a" style="left:539px;top:366px;" width="13" height="12" viewBox="0 0 13 12"><path d="M1.5,6.5 L5,10 L11.5,2" fill="none" stroke="#fff" stroke-width="2.6"/></svg><svg class="a" style="left:666px;top:402px;" width="24" height="38" viewBox="0 0 24 38"><path d="M1,1 L1,29 L7.5,23 L12,34 L16.5,32 L12,21.5 L21,21.5 Z" fill="#f4f4f4" stroke="#111" stroke-width="1.2" stroke-linejoin="round"/></svg></body></html>
